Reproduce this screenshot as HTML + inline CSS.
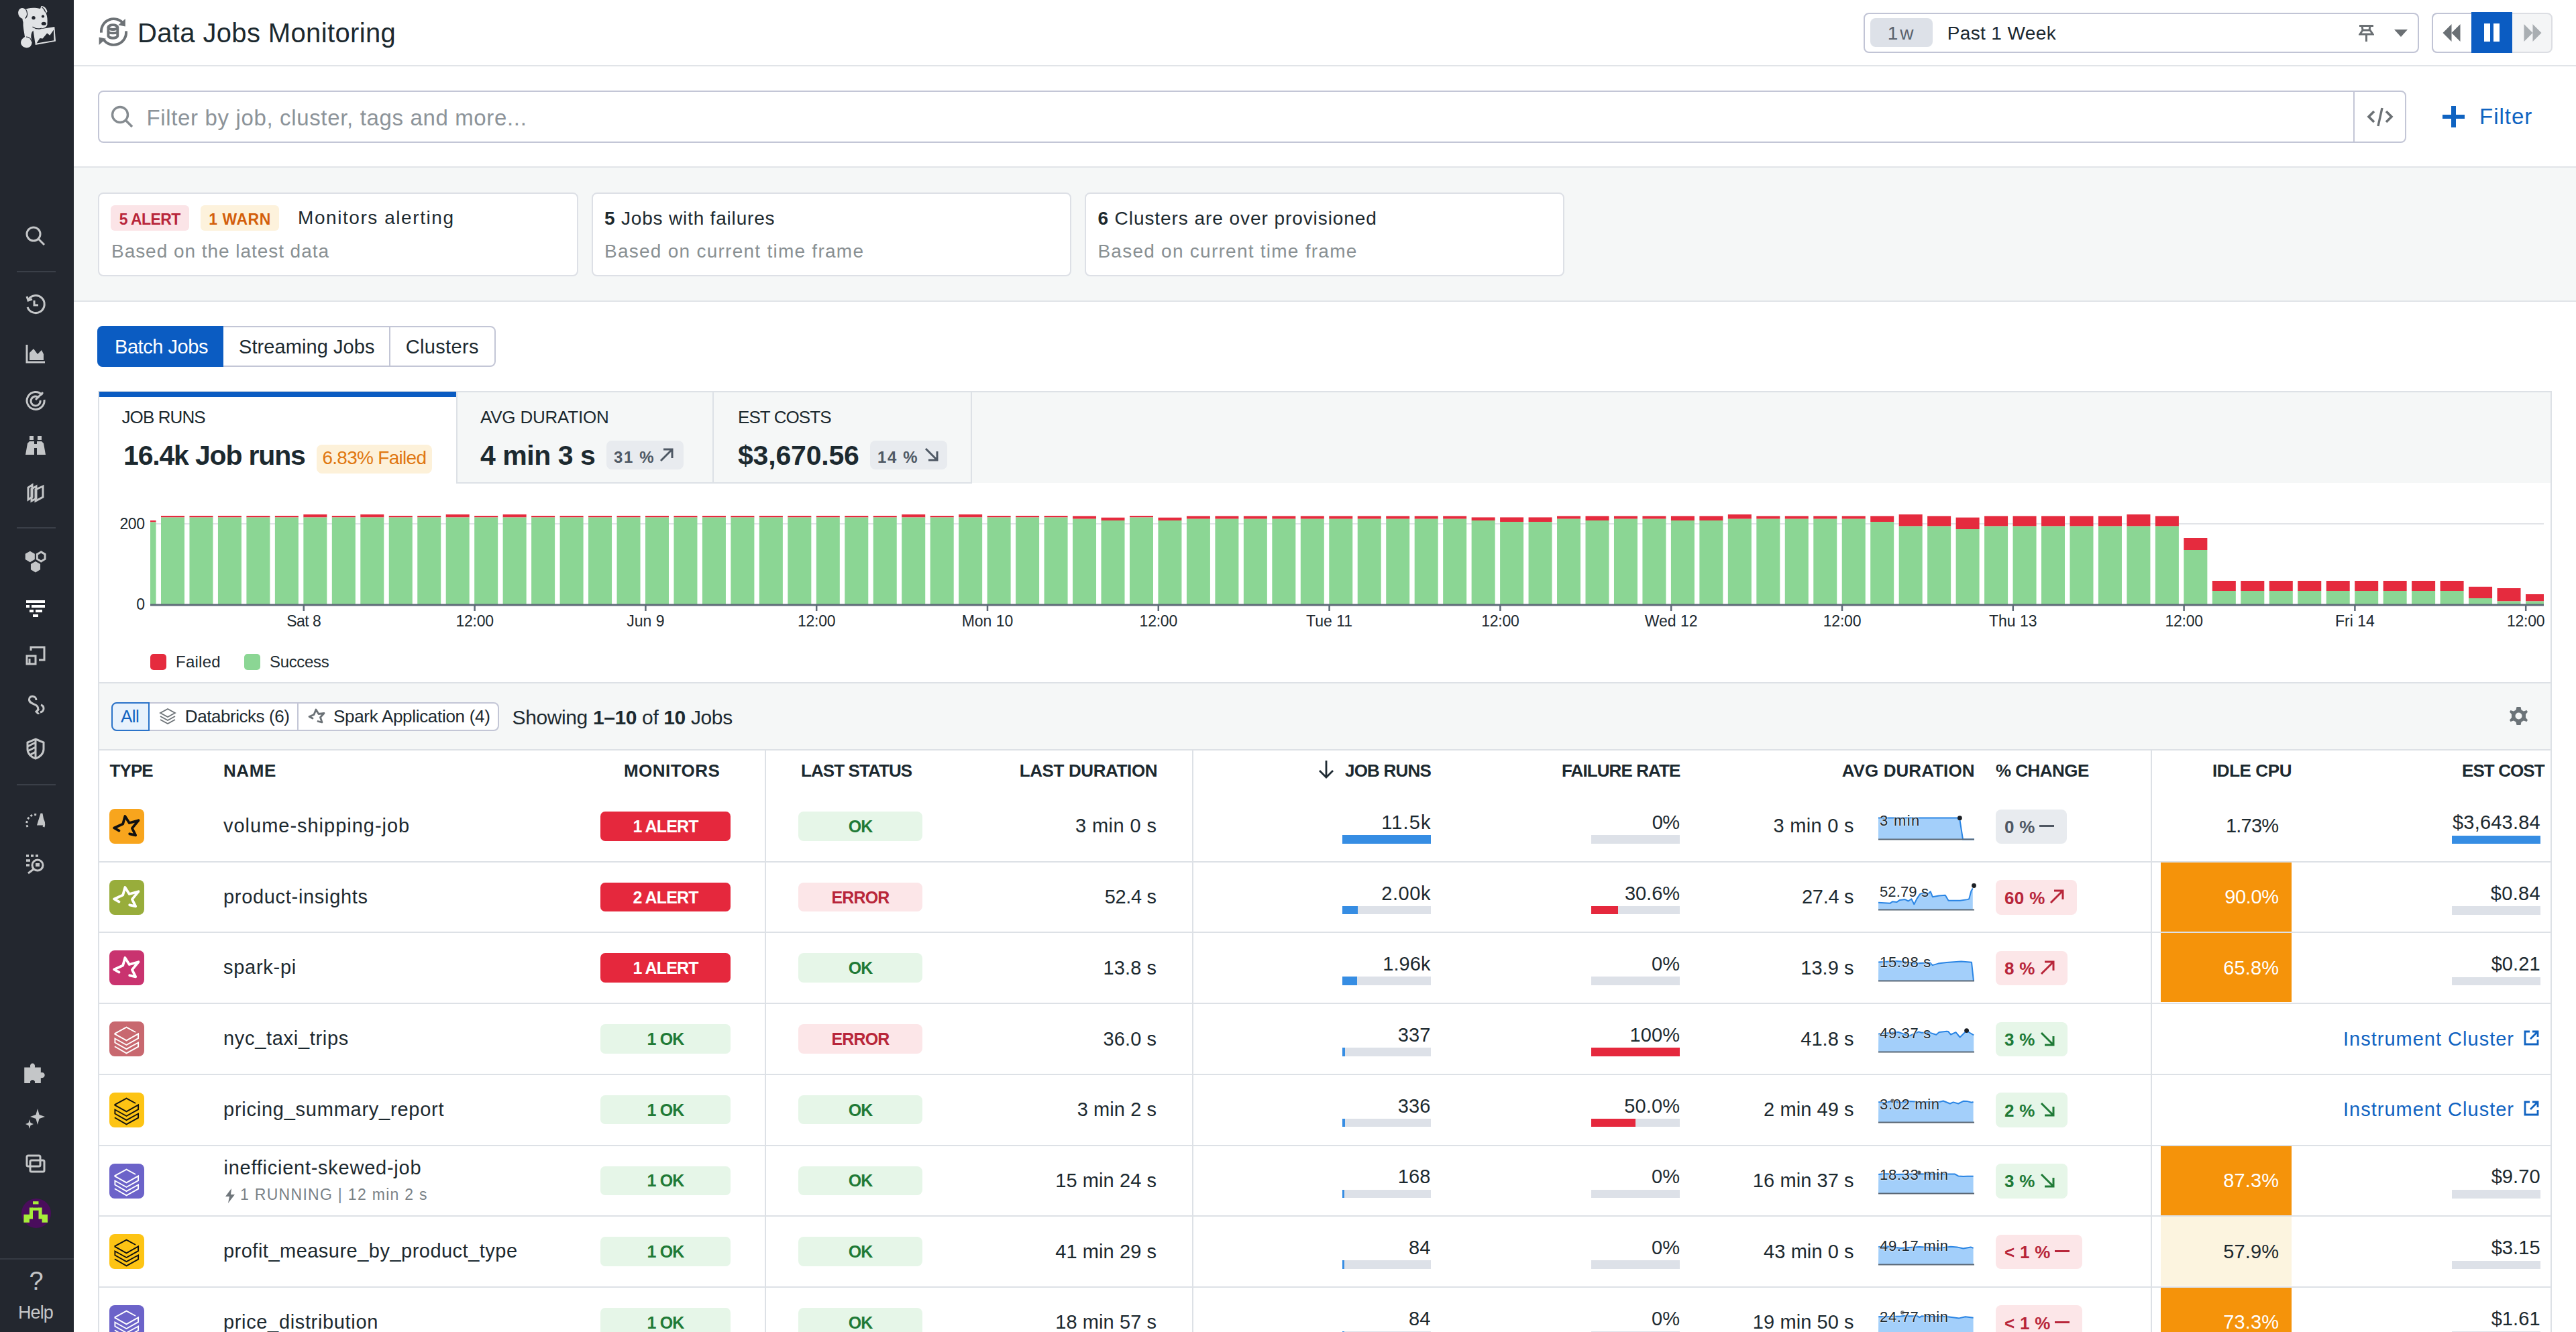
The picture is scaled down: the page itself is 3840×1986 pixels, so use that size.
<!DOCTYPE html>
<html><head><meta charset="utf-8"><title>Data Jobs Monitoring</title>
<style>
html,body{margin:0;padding:0;}
body{width:3840px;height:1986px;position:relative;overflow:hidden;background:#fff;font-family:"Liberation Sans", sans-serif;}
b{font-weight:700;}
@media (max-width: 2400px) { html { zoom: 0.5; } }
</style></head><body>
<div style="position:absolute;left:0.00px;top:0.00px;width:110.00px;height:1986.00px;background:#23272f;"></div>
<div style="position:absolute;left:110.00px;top:97.00px;width:3730.00px;height:2.00px;background:#e1e4e8;"></div>
<div style="position:absolute;left:110.00px;top:250.00px;width:3730.00px;height:198.00px;background:#f5f7f7;"></div>
<div style="position:absolute;left:110.00px;top:248.00px;width:3730.00px;height:2.00px;background:#e1e4e8;"></div>
<div style="position:absolute;left:110.00px;top:447.50px;width:3730.00px;height:2.00px;background:#e1e4e8;"></div>
<svg style="position:absolute;left:0.00px;top:0.00px;" width="110" height="110" viewBox="0 0 110 110">
<g fill="#e1e3e5">
<ellipse cx="34" cy="20" rx="6.8" ry="8.2" transform="rotate(-20 34 20)"/>
<path d="M36 15 C42 11 52 11 60 13 L61.5 9 C66 8.5 70 13 70.5 17.5 L68.5 19.5 C70.5 24 71 30 70.5 34.5 C71 38.5 68.5 41 64 42 L50 45.5 C47 47 46 52 46.5 57 C48 60 48.5 66 45 69.5 C41 72.5 34 71.5 31.5 66 C30 61 33 57.5 37 55 C36 47 34 40 34.5 33 C33 29 33 22 36 15 Z"/>
<path d="M49.5 45 L81.3 40 L83 61.5 L52.8 66.9 Z"/>
</g>
<g fill="#23272f">
<circle cx="50" cy="26.6" r="2.7"/><circle cx="64" cy="24.4" r="2.1"/>
<ellipse cx="65.3" cy="35.2" rx="3.6" ry="2.5"/>
<path d="M54.5 64.5 L59.5 57 L63.6 57.5 L70.2 49.5 L74.3 52.8 L80 44.6 L80.5 60.3 Z"/>
</g>
<g fill="none" stroke="#23272f" stroke-width="1.2">
<path d="M48.5 40 Q55 44.5 62 42"/>
<path d="M38.5 14 C41.5 18 41.5 24.5 37.5 27.5"/>
<path d="M62.5 10.5 C65 12.5 67 15.5 68 18.5"/>
<path d="M39 55 C44 55 46.5 58.5 47 62"/>
</g></svg>
<div style="position:absolute;left:25.00px;top:403.50px;width:58.00px;height:2.00px;background:#3a3f48;"></div>
<div style="position:absolute;left:25.00px;top:786.00px;width:58.00px;height:2.00px;background:#3a3f48;"></div>
<div style="position:absolute;left:25.00px;top:1169.00px;width:58.00px;height:2.00px;background:#3a3f48;"></div>
<div style="position:absolute;left:0.00px;top:1875.50px;width:110.00px;height:2.00px;background:#353a43;"></div>
<svg style="position:absolute;left:36.00px;top:335.00px;" width="34" height="34" viewBox="0 0 34 34"><g fill="none" stroke="#c4c6c8" stroke-width="3"><circle cx="14" cy="14" r="10"/><path d="M21.5 21.5 L30 30"/></g></svg>
<svg style="position:absolute;left:36.00px;top:438.00px;" width="34" height="34" viewBox="0 0 34 34"><g fill="none" stroke="#c4c6c8" stroke-width="3"><path d="M6 9 A13 13 0 1 1 5 20"/><path d="M4 4 L6 10 L12 8" /><path d="M15 10 V17 H21"/></g></svg>
<svg style="position:absolute;left:36.00px;top:510.00px;" width="34" height="34" viewBox="0 0 34 34"><g fill="none" stroke="#c4c6c8" stroke-width="3"><path d="M4 4 V30 H31"/><path d="M8 27 V16 L14 10 L20 18 L26 12 L29 18 V27Z" fill="#c4c6c8" stroke="none"/></g></svg>
<svg style="position:absolute;left:36.00px;top:578.50px;" width="34" height="34" viewBox="0 0 34 34"><g fill="none" stroke="#c4c6c8" stroke-width="3"><path d="M27 10 A13 13 0 1 0 30 17"/><path d="M22 14 A7 7 0 1 0 24 18"/><path d="M17 17 L28 6"/></g></svg>
<svg style="position:absolute;left:36.00px;top:647.00px;" width="34" height="34" viewBox="0 0 34 34"><g fill="none" stroke="#c4c6c8" stroke-width="3"><path d="M2 31 L5 14 L8 11 H15 V31Z M19 31 V11 H26 L29 14 L32 31Z M15 15 H19 V21 H15Z" fill="#c4c6c8" stroke="none"/><rect x="8" y="3" width="6" height="6" fill="#c4c6c8" stroke="none"/><rect x="20" y="3" width="6" height="6" fill="#c4c6c8" stroke="none"/></g></svg>
<svg style="position:absolute;left:36.00px;top:717.00px;" width="34" height="34" viewBox="0 0 34 34"><g fill="none" stroke="#c4c6c8" stroke-width="3"><path d="M6 10 L12 6 V24 L6 28Z"/><path d="M11 12 L18 8 V26 L11 30Z"/><path d="M17 13 L28 8 V24 L17 30Z"/></g></svg>
<svg style="position:absolute;left:33.00px;top:817.00px;" width="40" height="40" viewBox="0 0 34 34"><g fill="none" stroke="#c4c6c8" stroke-width="3"><path d="M10 4 L16 7.5 V14.5 L10 18 L4 14.5 V7.5Z M17 17 L23 20.5 V27.5 L17 31 L11 27.5 V20.5Z" fill="#c4c6c8" stroke="none"/><path d="M24 5 L29 8 V14 L24 17 L19 14 V8Z" stroke-width="2.5"/></g></svg>
<svg style="position:absolute;left:36.00px;top:890.70px;" width="34" height="34" viewBox="0 0 34 34"><g fill="none" stroke="#c4c6c8" stroke-width="3"><path d="M3 6 H31 M3 13 H8 M11 13 H31 M8 20 H14 M17 20 H27 M13 27 H21" stroke="#ffffff" stroke-width="4"/></g></svg>
<svg style="position:absolute;left:36.00px;top:959.60px;" width="34" height="34" viewBox="0 0 34 34"><g fill="none" stroke="#c4c6c8" stroke-width="3"><path d="M10 10 V5 H30 V24 H22"/><path d="M4 18 H17 V30 H4Z M8 22 V30"/></g></svg>
<svg style="position:absolute;left:36.00px;top:1030.50px;" width="34" height="34" viewBox="0 0 34 34"><g fill="none" stroke="#c4c6c8" stroke-width="3"><path d="M18 13 C18 6 8 5 7.5 11.5 C7 17 13 18 17 20 C21 22 22 27 19 29.5"/><path d="M24 31 C30 30 31 22 25 20" /><path d="M22 26 L18 30 L22 34" stroke-width="3"/></g></svg>
<svg style="position:absolute;left:36.00px;top:1099.40px;" width="34" height="34" viewBox="0 0 34 34"><g fill="none" stroke="#c4c6c8" stroke-width="3"><path d="M17 3 L29 8 V18 C29 25 23 30 17 32 C11 30 5 25 5 18 V8Z"/><path d="M17 3 V32 M5 14 L17 8 M5 21 L17 15 M8 27 L17 22"/></g></svg>
<svg style="position:absolute;left:36.00px;top:1207.00px;" width="34" height="34" viewBox="0 0 34 34"><g fill="none" stroke="#c4c6c8" stroke-width="3"><path d="M5 26 A13 13 0 0 1 20 8" stroke-dasharray="3 3"/><path d="M21 22 L26 6 L29 22Z" fill="#c4c6c8"/><path d="M27 14 A13 13 0 0 1 29 26"/></g></svg>
<svg style="position:absolute;left:36.00px;top:1269.70px;" width="34" height="34" viewBox="0 0 34 34"><g fill="none" stroke="#c4c6c8" stroke-width="3"><path d="M3 6 H7 M10 6 H14 M17 6 H21 M3 13 H9 M3 20 H8" stroke-width="3.5"/><circle cx="20" cy="20" r="8"/><path d="M14 26 L6 32"/><rect x="17" y="17" width="6" height="5" fill="#c4c6c8" stroke="none"/></g></svg>
<svg style="position:absolute;left:34.00px;top:1577.70px;" width="38" height="38" viewBox="0 0 34 34"><g fill="none" stroke="#c4c6c8" stroke-width="3"><path d="M2 12 H10 C8.5 5 17.5 5 16 12 H24 V19 C31 17.5 31 27.5 24 26 V33 H16 C17.5 27.5 8.5 27.5 10 33 H2Z" fill="#c4c6c8" stroke="none"/></g></svg>
<svg style="position:absolute;left:36.00px;top:1649.00px;" width="34" height="34" viewBox="0 0 34 34"><g fill="none" stroke="#c4c6c8" stroke-width="3"><path d="M20 4 L22.5 13 L31 16 L22.5 19 L20 28 L17.5 19 L9 16 L17.5 13Z M8 20 L9.5 25 L14 27 L9.5 29 L8 34 L6.5 29 L2 27 L6.5 25Z" fill="#c4c6c8" stroke="none"/></g></svg>
<svg style="position:absolute;left:36.00px;top:1718.00px;" width="34" height="34" viewBox="0 0 34 34"><g fill="none" stroke="#c4c6c8" stroke-width="3"><rect x="4" y="5" width="20" height="16" rx="2"/><rect x="9" y="12" width="21" height="17" rx="2"/></g></svg>
<svg style="position:absolute;left:31.50px;top:1787.00px;" width="44" height="44" viewBox="0 0 44 44"><circle cx="22" cy="22" r="22" fill="#4a0d5c"/><g fill="#a6ec3a"><rect x="17" y="4.2" width="8.5" height="4.3"/><path d="M3.4 23.8 H11.9 V13.6 H17 V30.6 H11.9 V35.7 H3.4 Z"/><path d="M39 23.8 H30.6 V13.6 H25.5 V30.6 H30.6 V35.7 H39 Z"/><rect x="16.5" y="13.6" width="9.5" height="4.2"/></g></svg>
<div id="t0" style="position:absolute;top:1890.83px;font-size:38.00px;line-height:38.00px;color:#c4c6c8;font-weight:400;white-space:nowrap;letter-spacing:0.000px;left:54.00px;width:0;display:flex;justify-content:center;"><span>?</span></div>
<div id="t1" style="position:absolute;top:1944.14px;font-size:27.00px;line-height:27.00px;color:#c4c6c8;font-weight:400;white-space:nowrap;letter-spacing:-0.883px;left:53.00px;width:0;display:flex;justify-content:center;"><span>Help</span></div>
<svg style="position:absolute;left:142.50px;top:21.00px;" width="53" height="53" viewBox="0 0 46 46"><g fill="none" stroke="#6d7276" stroke-width="3.4">
<path d="M7 24 A16 16 0 0 1 36 13"/><path d="M39 22 A16 16 0 0 1 10 33"/>
<ellipse cx="22" cy="17" rx="6" ry="3"/><path d="M16 17 V28 C16 32 28 32 28 28 V17"/><path d="M16 22.5 C16 25.5 28 25.5 28 22.5" stroke-width="3"/>
</g>
<path d="M38 6 L38 16 L29 14Z" fill="#6d7276"/><path d="M4 40 L4 30 L13 32Z" fill="#6d7276"/></svg>
<div id="t2" style="position:absolute;top:29.13px;font-size:40.00px;line-height:40.00px;color:#1c292f;font-weight:400;white-space:nowrap;letter-spacing:0.359px;left:205.00px;"><span>Data Jobs Monitoring</span></div>
<div style="position:absolute;left:2777.50px;top:18.50px;width:828.50px;height:60.00px;background:#fff;border:2px solid #c1c4d5;border-radius:8px;box-sizing:border-box;"></div>
<div style="position:absolute;left:2788.00px;top:27.00px;width:92.50px;height:42.50px;background:#dde1e8;border-radius:8px;"></div>
<div id="t3" style="position:absolute;top:36.29px;font-size:28.00px;line-height:28.00px;color:#5a636e;font-weight:400;white-space:nowrap;letter-spacing:2.852px;left:2834.50px;width:0;display:flex;justify-content:center;"><span>1w</span></div>
<div id="t4" style="position:absolute;top:36.29px;font-size:28.00px;line-height:28.00px;color:#1c292f;font-weight:400;white-space:nowrap;letter-spacing:0.373px;left:2902.70px;"><span>Past 1 Week</span></div>
<svg style="position:absolute;left:3516.00px;top:36.00px;" width="23" height="27" viewBox="0 0 23 27"><path d="M1 2.5 H22 M5 2.5 L6 9 M17 2.5 L16 9 M6 9 L2 15 H21 L17 9Z M11.5 15 V26" fill="none" stroke="#6b7074" stroke-width="3"/></svg>
<svg style="position:absolute;left:3569.00px;top:44.00px;" width="20" height="11" viewBox="0 0 20 11"><path d="M0 0 H20 L10 11Z" fill="#6b7074"/></svg>
<div style="position:absolute;left:3624.50px;top:18.50px;width:180.00px;height:60.00px;background:#f4f5f6;border:2px solid #dcdee3;border-radius:8px;box-sizing:border-box;"></div>
<div style="position:absolute;left:3624.5px;top:18.5px;width:70px;height:60px;border:2px solid #c1c4d5;border-right:none;border-radius:8px 0 0 8px;background:#fff;box-sizing:border-box;"></div>
<div style="position:absolute;left:3684.00px;top:18.00px;width:61.00px;height:60.50px;background:#0b5cc2;"></div>
<svg style="position:absolute;left:3641.00px;top:36.00px;" width="27" height="26" viewBox="0 0 26 26"><path d="M0 13 L13 0 V26Z M13 13 L26 0 V26Z" fill="#6a7075"/></svg>
<div style="position:absolute;left:3702.70px;top:35.00px;width:9.10px;height:27.20px;background:#fff;"></div>
<div style="position:absolute;left:3717.40px;top:35.00px;width:8.90px;height:27.20px;background:#fff;"></div>
<svg style="position:absolute;left:3762.00px;top:36.00px;" width="27" height="26" viewBox="0 0 26 26"><path d="M0 0 L13 13 L0 26Z M13 0 L26 13 L13 26Z" fill="#a9aeb2"/></svg>
<div style="position:absolute;left:145.50px;top:134.50px;width:3441.50px;height:78.00px;background:#fff;border:2px solid #c3c6d6;border-radius:8px;box-sizing:border-box;"></div>
<div style="position:absolute;left:3508.00px;top:135.00px;width:2.00px;height:77.00px;background:#c3c6d6;"></div>
<svg style="position:absolute;left:164.00px;top:156.00px;" width="38" height="38" viewBox="0 0 38 38"><circle cx="15" cy="15" r="11.5" fill="none" stroke="#858b90" stroke-width="3.4"/><path d="M23.5 23.5 L33 33" stroke="#858b90" stroke-width="3.6"/></svg>
<div id="t5" style="position:absolute;top:158.66px;font-size:33.00px;line-height:33.00px;color:#8c9399;font-weight:400;white-space:nowrap;letter-spacing:0.647px;left:218.50px;"><span>Filter by job, cluster, tags and more...</span></div>
<svg style="position:absolute;left:3528.00px;top:158.00px;" width="40" height="32" viewBox="0 0 40 32"><path d="M11 8 L3 16 L11 24 M29 8 L37 16 L29 24" fill="none" stroke="#6b7074" stroke-width="3.6"/><path d="M23 3 L17 30" stroke="#6b7074" stroke-width="3.4"/></svg>
<div style="position:absolute;left:3641.00px;top:170.50px;width:33.00px;height:6.50px;background:#0f63c1;"></div>
<div style="position:absolute;left:3654.30px;top:157.50px;width:6.50px;height:32.50px;background:#0f63c1;"></div>
<div id="t6" style="position:absolute;top:156.86px;font-size:33.00px;line-height:33.00px;color:#0f63c1;font-weight:400;white-space:nowrap;letter-spacing:0.994px;left:3696.00px;"><span>Filter</span></div>
<div style="position:absolute;left:146.00px;top:287.00px;width:715.50px;height:124.50px;background:#fff;border:2px solid #dde0e6;border-radius:8px;box-sizing:border-box;"></div>
<div style="position:absolute;left:882.00px;top:287.00px;width:714.50px;height:124.50px;background:#fff;border:2px solid #dde0e6;border-radius:8px;box-sizing:border-box;"></div>
<div style="position:absolute;left:1617.00px;top:287.00px;width:715.00px;height:124.50px;background:#fff;border:2px solid #dde0e6;border-radius:8px;box-sizing:border-box;"></div>
<div style="position:absolute;left:165.00px;top:306.00px;width:116.50px;height:38.00px;background:#fbe4e7;border-radius:6px;"></div>
<div id="t7" style="position:absolute;top:315.73px;font-size:23.00px;line-height:23.00px;color:#b8263b;font-weight:700;white-space:nowrap;letter-spacing:-0.565px;left:223.30px;width:0;display:flex;justify-content:center;"><span>5 ALERT</span></div>
<div style="position:absolute;left:299.00px;top:306.00px;width:117.00px;height:38.00px;background:#fdf2dc;border-radius:6px;"></div>
<div id="t8" style="position:absolute;top:315.73px;font-size:23.00px;line-height:23.00px;color:#d35f0c;font-weight:700;white-space:nowrap;letter-spacing:0.530px;left:357.50px;width:0;display:flex;justify-content:center;"><span>1 WARN</span></div>
<div id="t9" style="position:absolute;top:311.49px;font-size:28.00px;line-height:28.00px;color:#1c292f;font-weight:400;white-space:nowrap;letter-spacing:1.561px;left:444.00px;"><span>Monitors alerting</span></div>
<div id="t10" style="position:absolute;top:361.29px;font-size:28.00px;line-height:28.00px;color:#899093;font-weight:400;white-space:nowrap;letter-spacing:0.955px;left:166.00px;"><span>Based on the latest data</span></div>
<div id="t11" style="position:absolute;top:312.29px;font-size:28.00px;line-height:28.00px;color:#1c292f;font-weight:400;white-space:nowrap;letter-spacing:0.813px;left:901.00px;"><span><b>5</b> Jobs with failures</span></div>
<div id="t12" style="position:absolute;top:361.29px;font-size:28.00px;line-height:28.00px;color:#899093;font-weight:400;white-space:nowrap;letter-spacing:1.257px;left:901.00px;"><span>Based on current time frame</span></div>
<div id="t13" style="position:absolute;top:312.29px;font-size:28.00px;line-height:28.00px;color:#1c292f;font-weight:400;white-space:nowrap;letter-spacing:0.934px;left:1636.40px;"><span><b>6</b> Clusters are over provisioned</span></div>
<div id="t14" style="position:absolute;top:361.29px;font-size:28.00px;line-height:28.00px;color:#899093;font-weight:400;white-space:nowrap;letter-spacing:1.257px;left:1636.40px;"><span>Based on current time frame</span></div>
<div style="position:absolute;left:145.00px;top:486.00px;width:594.00px;height:61.00px;background:#fff;border:2px solid #c3c6d6;border-radius:8px;box-sizing:border-box;"></div>
<div style="position:absolute;left:145px;top:486px;width:188px;height:61px;background:#0b5cc2;border-radius:8px 0 0 8px;"></div>
<div style="position:absolute;left:580.00px;top:487.00px;width:2.00px;height:59.00px;background:#c3c6d6;"></div>
<div id="t15" style="position:absolute;top:503.25px;font-size:29.00px;line-height:29.00px;color:#fff;font-weight:400;white-space:nowrap;letter-spacing:-0.450px;left:171.00px;"><span>Batch Jobs</span></div>
<div id="t16" style="position:absolute;top:503.25px;font-size:29.00px;line-height:29.00px;color:#1c292f;font-weight:400;white-space:nowrap;letter-spacing:0.080px;left:356.00px;"><span>Streaming Jobs</span></div>
<div id="t17" style="position:absolute;top:503.25px;font-size:29.00px;line-height:29.00px;color:#1c292f;font-weight:400;white-space:nowrap;letter-spacing:0.338px;left:604.70px;"><span>Clusters</span></div>
<div style="position:absolute;left:146.00px;top:583.00px;width:2.00px;height:1403.00px;background:#dde1e6;"></div>
<div style="position:absolute;left:3802.00px;top:583.00px;width:2.00px;height:1403.00px;background:#dde1e6;"></div>
<div style="position:absolute;left:146.00px;top:583.00px;width:3658.00px;height:2.00px;background:#dde1e6;"></div>
<div style="position:absolute;left:148.00px;top:585.00px;width:3654.00px;height:135.00px;background:#f5f7f7;"></div>
<div style="position:absolute;left:148.00px;top:585.00px;width:532.00px;height:135.00px;background:#fff;"></div>
<div style="position:absolute;left:148.00px;top:584.00px;width:532.00px;height:7.50px;background:#0b5cc2;"></div>
<div style="position:absolute;left:1062.00px;top:585.00px;width:2.00px;height:135.00px;background:#dde1e6;"></div>
<div style="position:absolute;left:1447.00px;top:585.00px;width:2.00px;height:135.00px;background:#dde1e6;"></div>
<div style="position:absolute;left:680.00px;top:718.50px;width:769.00px;height:2.00px;background:#dde1e6;"></div>
<div style="position:absolute;left:680.00px;top:585.00px;width:2.00px;height:135.00px;background:#dde1e6;"></div>
<div id="t18" style="position:absolute;top:608.99px;font-size:26.00px;line-height:26.00px;color:#1c292f;font-weight:400;white-space:nowrap;letter-spacing:-0.910px;left:181.50px;"><span>JOB RUNS</span></div>
<div id="t19" style="position:absolute;top:658.99px;font-size:41.00px;line-height:41.00px;color:#1c292f;font-weight:700;white-space:nowrap;letter-spacing:-1.173px;left:184.00px;"><span>16.4k Job runs</span></div>
<div style="position:absolute;left:472.00px;top:663.00px;width:171.50px;height:43.00px;background:#fdf1d9;border-radius:8px;"></div>
<div id="t20" style="position:absolute;top:669.29px;font-size:28.00px;line-height:28.00px;color:#e07710;font-weight:400;white-space:nowrap;letter-spacing:-0.716px;left:480.40px;"><span>6.83% Failed</span></div>
<div id="t21" style="position:absolute;top:608.99px;font-size:26.00px;line-height:26.00px;color:#1c292f;font-weight:400;white-space:nowrap;letter-spacing:-0.204px;left:716.00px;"><span>AVG DURATION</span></div>
<div id="t22" style="position:absolute;top:658.99px;font-size:41.00px;line-height:41.00px;color:#1c292f;font-weight:700;white-space:nowrap;letter-spacing:-0.451px;left:716.00px;"><span>4 min 3 s</span></div>
<div style="position:absolute;left:904.00px;top:657.00px;width:114.50px;height:43.00px;background:#e8ebef;border-radius:8px;"></div>
<div id="t23" style="position:absolute;top:669.68px;font-size:24.00px;line-height:24.00px;color:#4f5965;font-weight:700;white-space:nowrap;letter-spacing:1.650px;left:915.00px;"><span>31 % </span></div>
<svg style="position:absolute;left:981.00px;top:665.00px;" width="26" height="26" viewBox="0 0 26 26"><path d="M4 22 L21 5 M8 5 H21 V18" fill="none" stroke="#4f5965" stroke-width="3"/></svg>
<div id="t24" style="position:absolute;top:608.99px;font-size:26.00px;line-height:26.00px;color:#1c292f;font-weight:400;white-space:nowrap;letter-spacing:-0.910px;left:1100.00px;"><span>EST COSTS</span></div>
<div id="t25" style="position:absolute;top:658.99px;font-size:41.00px;line-height:41.00px;color:#1c292f;font-weight:700;white-space:nowrap;letter-spacing:-0.191px;left:1100.00px;"><span>$3,670.56</span></div>
<div style="position:absolute;left:1297.00px;top:657.00px;width:114.50px;height:43.00px;background:#e8ebef;border-radius:8px;"></div>
<div id="t26" style="position:absolute;top:669.68px;font-size:24.00px;line-height:24.00px;color:#4f5965;font-weight:700;white-space:nowrap;letter-spacing:1.650px;left:1308.00px;"><span>14 % </span></div>
<svg style="position:absolute;left:1376.00px;top:665.00px;" width="26" height="26" viewBox="0 0 26 26"><path d="M4 4 L21 21 M21 8 V21 H8" fill="none" stroke="#4f5965" stroke-width="3"/></svg>
<svg style="position:absolute;left:224.00px;top:700.00px;" width="3568" height="220" viewBox="0 0 3568 220"><rect x="0" y="80.25" width="3568" height="1.5" fill="#d9dce1"/><rect x="0.00" y="76.00" width="8.53" height="2.50" fill="#e52b3e"/><rect x="0.00" y="78.50" width="8.53" height="122.50" fill="#8bd694"/><rect x="16.00" y="69.00" width="35.00" height="2.50" fill="#e52b3e"/><rect x="16.00" y="71.50" width="35.00" height="129.50" fill="#8bd694"/><rect x="58.47" y="69.00" width="35.00" height="2.50" fill="#e52b3e"/><rect x="58.47" y="71.50" width="35.00" height="129.50" fill="#8bd694"/><rect x="100.94" y="69.00" width="35.00" height="2.50" fill="#e52b3e"/><rect x="100.94" y="71.50" width="35.00" height="129.50" fill="#8bd694"/><rect x="143.41" y="69.00" width="35.00" height="2.50" fill="#e52b3e"/><rect x="143.41" y="71.50" width="35.00" height="129.50" fill="#8bd694"/><rect x="185.88" y="69.00" width="35.00" height="2.50" fill="#e52b3e"/><rect x="185.88" y="71.50" width="35.00" height="129.50" fill="#8bd694"/><rect x="228.35" y="67.00" width="35.00" height="4.50" fill="#e52b3e"/><rect x="228.35" y="71.50" width="35.00" height="129.50" fill="#8bd694"/><rect x="270.82" y="69.00" width="35.00" height="2.50" fill="#e52b3e"/><rect x="270.82" y="71.50" width="35.00" height="129.50" fill="#8bd694"/><rect x="313.29" y="67.00" width="35.00" height="4.50" fill="#e52b3e"/><rect x="313.29" y="71.50" width="35.00" height="129.50" fill="#8bd694"/><rect x="355.76" y="69.00" width="35.00" height="2.50" fill="#e52b3e"/><rect x="355.76" y="71.50" width="35.00" height="129.50" fill="#8bd694"/><rect x="398.23" y="69.00" width="35.00" height="2.50" fill="#e52b3e"/><rect x="398.23" y="71.50" width="35.00" height="129.50" fill="#8bd694"/><rect x="440.70" y="67.00" width="35.00" height="4.50" fill="#e52b3e"/><rect x="440.70" y="71.50" width="35.00" height="129.50" fill="#8bd694"/><rect x="483.17" y="69.00" width="35.00" height="2.50" fill="#e52b3e"/><rect x="483.17" y="71.50" width="35.00" height="129.50" fill="#8bd694"/><rect x="525.64" y="67.00" width="35.00" height="4.50" fill="#e52b3e"/><rect x="525.64" y="71.50" width="35.00" height="129.50" fill="#8bd694"/><rect x="568.11" y="69.00" width="35.00" height="2.50" fill="#e52b3e"/><rect x="568.11" y="71.50" width="35.00" height="129.50" fill="#8bd694"/><rect x="610.58" y="69.00" width="35.00" height="2.50" fill="#e52b3e"/><rect x="610.58" y="71.50" width="35.00" height="129.50" fill="#8bd694"/><rect x="653.05" y="69.00" width="35.00" height="2.50" fill="#e52b3e"/><rect x="653.05" y="71.50" width="35.00" height="129.50" fill="#8bd694"/><rect x="695.52" y="69.00" width="35.00" height="2.50" fill="#e52b3e"/><rect x="695.52" y="71.50" width="35.00" height="129.50" fill="#8bd694"/><rect x="737.99" y="69.00" width="35.00" height="2.50" fill="#e52b3e"/><rect x="737.99" y="71.50" width="35.00" height="129.50" fill="#8bd694"/><rect x="780.46" y="69.00" width="35.00" height="2.50" fill="#e52b3e"/><rect x="780.46" y="71.50" width="35.00" height="129.50" fill="#8bd694"/><rect x="822.93" y="69.00" width="35.00" height="2.50" fill="#e52b3e"/><rect x="822.93" y="71.50" width="35.00" height="129.50" fill="#8bd694"/><rect x="865.40" y="69.00" width="35.00" height="2.50" fill="#e52b3e"/><rect x="865.40" y="71.50" width="35.00" height="129.50" fill="#8bd694"/><rect x="907.87" y="69.00" width="35.00" height="2.50" fill="#e52b3e"/><rect x="907.87" y="71.50" width="35.00" height="129.50" fill="#8bd694"/><rect x="950.34" y="69.00" width="35.00" height="2.50" fill="#e52b3e"/><rect x="950.34" y="71.50" width="35.00" height="129.50" fill="#8bd694"/><rect x="992.81" y="69.00" width="35.00" height="2.50" fill="#e52b3e"/><rect x="992.81" y="71.50" width="35.00" height="129.50" fill="#8bd694"/><rect x="1035.28" y="69.00" width="35.00" height="2.50" fill="#e52b3e"/><rect x="1035.28" y="71.50" width="35.00" height="129.50" fill="#8bd694"/><rect x="1077.75" y="69.00" width="35.00" height="2.50" fill="#e52b3e"/><rect x="1077.75" y="71.50" width="35.00" height="129.50" fill="#8bd694"/><rect x="1120.22" y="67.00" width="35.00" height="4.50" fill="#e52b3e"/><rect x="1120.22" y="71.50" width="35.00" height="129.50" fill="#8bd694"/><rect x="1162.69" y="69.00" width="35.00" height="2.50" fill="#e52b3e"/><rect x="1162.69" y="71.50" width="35.00" height="129.50" fill="#8bd694"/><rect x="1205.16" y="67.00" width="35.00" height="4.50" fill="#e52b3e"/><rect x="1205.16" y="71.50" width="35.00" height="129.50" fill="#8bd694"/><rect x="1247.63" y="69.00" width="35.00" height="2.50" fill="#e52b3e"/><rect x="1247.63" y="71.50" width="35.00" height="129.50" fill="#8bd694"/><rect x="1290.10" y="69.00" width="35.00" height="2.50" fill="#e52b3e"/><rect x="1290.10" y="71.50" width="35.00" height="129.50" fill="#8bd694"/><rect x="1332.57" y="69.00" width="35.00" height="2.50" fill="#e52b3e"/><rect x="1332.57" y="71.50" width="35.00" height="129.50" fill="#8bd694"/><rect x="1375.04" y="69.40" width="35.00" height="4.30" fill="#e52b3e"/><rect x="1375.04" y="73.70" width="35.00" height="127.30" fill="#8bd694"/><rect x="1417.51" y="71.70" width="35.00" height="4.30" fill="#e52b3e"/><rect x="1417.51" y="76.00" width="35.00" height="125.00" fill="#8bd694"/><rect x="1459.98" y="69.00" width="35.00" height="2.50" fill="#e52b3e"/><rect x="1459.98" y="71.50" width="35.00" height="129.50" fill="#8bd694"/><rect x="1502.45" y="71.70" width="35.00" height="4.30" fill="#e52b3e"/><rect x="1502.45" y="76.00" width="35.00" height="125.00" fill="#8bd694"/><rect x="1544.92" y="69.40" width="35.00" height="4.30" fill="#e52b3e"/><rect x="1544.92" y="73.70" width="35.00" height="127.30" fill="#8bd694"/><rect x="1587.39" y="69.40" width="35.00" height="4.30" fill="#e52b3e"/><rect x="1587.39" y="73.70" width="35.00" height="127.30" fill="#8bd694"/><rect x="1629.86" y="69.40" width="35.00" height="4.30" fill="#e52b3e"/><rect x="1629.86" y="73.70" width="35.00" height="127.30" fill="#8bd694"/><rect x="1672.33" y="69.40" width="35.00" height="4.30" fill="#e52b3e"/><rect x="1672.33" y="73.70" width="35.00" height="127.30" fill="#8bd694"/><rect x="1714.80" y="69.40" width="35.00" height="4.30" fill="#e52b3e"/><rect x="1714.80" y="73.70" width="35.00" height="127.30" fill="#8bd694"/><rect x="1757.27" y="69.40" width="35.00" height="4.30" fill="#e52b3e"/><rect x="1757.27" y="73.70" width="35.00" height="127.30" fill="#8bd694"/><rect x="1799.74" y="69.40" width="35.00" height="4.30" fill="#e52b3e"/><rect x="1799.74" y="73.70" width="35.00" height="127.30" fill="#8bd694"/><rect x="1842.21" y="69.40" width="35.00" height="4.30" fill="#e52b3e"/><rect x="1842.21" y="73.70" width="35.00" height="127.30" fill="#8bd694"/><rect x="1884.68" y="69.40" width="35.00" height="4.30" fill="#e52b3e"/><rect x="1884.68" y="73.70" width="35.00" height="127.30" fill="#8bd694"/><rect x="1927.15" y="69.40" width="35.00" height="4.30" fill="#e52b3e"/><rect x="1927.15" y="73.70" width="35.00" height="127.30" fill="#8bd694"/><rect x="1969.62" y="71.40" width="35.00" height="4.60" fill="#e52b3e"/><rect x="1969.62" y="76.00" width="35.00" height="125.00" fill="#8bd694"/><rect x="2012.09" y="71.40" width="35.00" height="6.60" fill="#e52b3e"/><rect x="2012.09" y="78.00" width="35.00" height="123.00" fill="#8bd694"/><rect x="2054.56" y="71.40" width="35.00" height="6.60" fill="#e52b3e"/><rect x="2054.56" y="78.00" width="35.00" height="123.00" fill="#8bd694"/><rect x="2097.03" y="69.40" width="35.00" height="4.30" fill="#e52b3e"/><rect x="2097.03" y="73.70" width="35.00" height="127.30" fill="#8bd694"/><rect x="2139.50" y="69.40" width="35.00" height="6.60" fill="#e52b3e"/><rect x="2139.50" y="76.00" width="35.00" height="125.00" fill="#8bd694"/><rect x="2181.97" y="69.40" width="35.00" height="4.30" fill="#e52b3e"/><rect x="2181.97" y="73.70" width="35.00" height="127.30" fill="#8bd694"/><rect x="2224.44" y="69.40" width="35.00" height="4.30" fill="#e52b3e"/><rect x="2224.44" y="73.70" width="35.00" height="127.30" fill="#8bd694"/><rect x="2266.91" y="69.40" width="35.00" height="6.60" fill="#e52b3e"/><rect x="2266.91" y="76.00" width="35.00" height="125.00" fill="#8bd694"/><rect x="2309.38" y="69.40" width="35.00" height="6.60" fill="#e52b3e"/><rect x="2309.38" y="76.00" width="35.00" height="125.00" fill="#8bd694"/><rect x="2351.85" y="67.00" width="35.00" height="6.70" fill="#e52b3e"/><rect x="2351.85" y="73.70" width="35.00" height="127.30" fill="#8bd694"/><rect x="2394.32" y="69.40" width="35.00" height="4.30" fill="#e52b3e"/><rect x="2394.32" y="73.70" width="35.00" height="127.30" fill="#8bd694"/><rect x="2436.79" y="69.40" width="35.00" height="4.30" fill="#e52b3e"/><rect x="2436.79" y="73.70" width="35.00" height="127.30" fill="#8bd694"/><rect x="2479.26" y="69.40" width="35.00" height="4.30" fill="#e52b3e"/><rect x="2479.26" y="73.70" width="35.00" height="127.30" fill="#8bd694"/><rect x="2521.73" y="69.40" width="35.00" height="4.30" fill="#e52b3e"/><rect x="2521.73" y="73.70" width="35.00" height="127.30" fill="#8bd694"/><rect x="2564.20" y="69.40" width="35.00" height="8.60" fill="#e52b3e"/><rect x="2564.20" y="78.00" width="35.00" height="123.00" fill="#8bd694"/><rect x="2606.67" y="67.00" width="35.00" height="17.60" fill="#e52b3e"/><rect x="2606.67" y="84.60" width="35.00" height="116.40" fill="#8bd694"/><rect x="2649.14" y="69.40" width="35.00" height="15.20" fill="#e52b3e"/><rect x="2649.14" y="84.60" width="35.00" height="116.40" fill="#8bd694"/><rect x="2691.61" y="71.60" width="35.00" height="17.40" fill="#e52b3e"/><rect x="2691.61" y="89.00" width="35.00" height="112.00" fill="#8bd694"/><rect x="2734.08" y="69.40" width="35.00" height="15.20" fill="#e52b3e"/><rect x="2734.08" y="84.60" width="35.00" height="116.40" fill="#8bd694"/><rect x="2776.55" y="69.40" width="35.00" height="15.20" fill="#e52b3e"/><rect x="2776.55" y="84.60" width="35.00" height="116.40" fill="#8bd694"/><rect x="2819.02" y="69.40" width="35.00" height="15.20" fill="#e52b3e"/><rect x="2819.02" y="84.60" width="35.00" height="116.40" fill="#8bd694"/><rect x="2861.49" y="69.40" width="35.00" height="15.20" fill="#e52b3e"/><rect x="2861.49" y="84.60" width="35.00" height="116.40" fill="#8bd694"/><rect x="2903.96" y="69.40" width="35.00" height="15.20" fill="#e52b3e"/><rect x="2903.96" y="84.60" width="35.00" height="116.40" fill="#8bd694"/><rect x="2946.43" y="67.00" width="35.00" height="17.60" fill="#e52b3e"/><rect x="2946.43" y="84.60" width="35.00" height="116.40" fill="#8bd694"/><rect x="2988.90" y="69.40" width="35.00" height="15.20" fill="#e52b3e"/><rect x="2988.90" y="84.60" width="35.00" height="116.40" fill="#8bd694"/><rect x="3031.37" y="102.00" width="35.00" height="18.00" fill="#e52b3e"/><rect x="3031.37" y="120.00" width="35.00" height="81.00" fill="#8bd694"/><rect x="3073.84" y="166.00" width="35.00" height="15.00" fill="#e52b3e"/><rect x="3073.84" y="181.00" width="35.00" height="20.00" fill="#8bd694"/><rect x="3116.31" y="166.00" width="35.00" height="15.00" fill="#e52b3e"/><rect x="3116.31" y="181.00" width="35.00" height="20.00" fill="#8bd694"/><rect x="3158.78" y="166.00" width="35.00" height="15.00" fill="#e52b3e"/><rect x="3158.78" y="181.00" width="35.00" height="20.00" fill="#8bd694"/><rect x="3201.25" y="166.00" width="35.00" height="15.00" fill="#e52b3e"/><rect x="3201.25" y="181.00" width="35.00" height="20.00" fill="#8bd694"/><rect x="3243.72" y="166.00" width="35.00" height="15.00" fill="#e52b3e"/><rect x="3243.72" y="181.00" width="35.00" height="20.00" fill="#8bd694"/><rect x="3286.19" y="166.00" width="35.00" height="15.00" fill="#e52b3e"/><rect x="3286.19" y="181.00" width="35.00" height="20.00" fill="#8bd694"/><rect x="3328.66" y="166.00" width="35.00" height="15.00" fill="#e52b3e"/><rect x="3328.66" y="181.00" width="35.00" height="20.00" fill="#8bd694"/><rect x="3371.13" y="166.00" width="35.00" height="15.00" fill="#e52b3e"/><rect x="3371.13" y="181.00" width="35.00" height="20.00" fill="#8bd694"/><rect x="3413.60" y="166.00" width="35.00" height="15.00" fill="#e52b3e"/><rect x="3413.60" y="181.00" width="35.00" height="20.00" fill="#8bd694"/><rect x="3456.07" y="174.80" width="35.00" height="17.20" fill="#e52b3e"/><rect x="3456.07" y="192.00" width="35.00" height="9.00" fill="#8bd694"/><rect x="3498.54" y="177.00" width="35.00" height="19.50" fill="#e52b3e"/><rect x="3498.54" y="196.50" width="35.00" height="4.50" fill="#8bd694"/><rect x="3541.01" y="186.00" width="26.99" height="10.50" fill="#e52b3e"/><rect x="3541.01" y="196.50" width="26.99" height="4.50" fill="#8bd694"/><rect x="0" y="200.5" width="3568" height="3" fill="#5f6a78"/><rect x="227.55" y="201" width="2.5" height="10" fill="#5f6a78"/><rect x="482.35" y="201" width="2.5" height="10" fill="#5f6a78"/><rect x="737.15" y="201" width="2.5" height="10" fill="#5f6a78"/><rect x="991.95" y="201" width="2.5" height="10" fill="#5f6a78"/><rect x="1246.75" y="201" width="2.5" height="10" fill="#5f6a78"/><rect x="1501.55" y="201" width="2.5" height="10" fill="#5f6a78"/><rect x="1756.35" y="201" width="2.5" height="10" fill="#5f6a78"/><rect x="2011.15" y="201" width="2.5" height="10" fill="#5f6a78"/><rect x="2265.95" y="201" width="2.5" height="10" fill="#5f6a78"/><rect x="2520.75" y="201" width="2.5" height="10" fill="#5f6a78"/><rect x="2775.55" y="201" width="2.5" height="10" fill="#5f6a78"/><rect x="3030.35" y="201" width="2.5" height="10" fill="#5f6a78"/><rect x="3285.15" y="201" width="2.5" height="10" fill="#5f6a78"/><rect x="3539.95" y="201" width="2.5" height="10" fill="#5f6a78"/></svg>
<div id="t27" style="position:absolute;top:769.53px;font-size:23.00px;line-height:23.00px;color:#1c292f;font-weight:400;white-space:nowrap;letter-spacing:-0.390px;right:3624.39px;"><span>200</span></div>
<div id="t28" style="position:absolute;top:890.03px;font-size:23.00px;line-height:23.00px;color:#1c292f;font-weight:400;white-space:nowrap;letter-spacing:0.000px;right:3624.00px;"><span>0</span></div>
<div id="t29" style="position:absolute;top:914.53px;font-size:23.00px;line-height:23.00px;color:#1c292f;font-weight:400;white-space:nowrap;letter-spacing:-0.527px;left:452.80px;width:0;display:flex;justify-content:center;"><span>Sat 8</span></div>
<div id="t30" style="position:absolute;top:914.53px;font-size:23.00px;line-height:23.00px;color:#1c292f;font-weight:400;white-space:nowrap;letter-spacing:-0.237px;left:707.60px;width:0;display:flex;justify-content:center;"><span>12:00</span></div>
<div id="t31" style="position:absolute;top:914.53px;font-size:23.00px;line-height:23.00px;color:#1c292f;font-weight:400;white-space:nowrap;letter-spacing:0.000px;left:962.40px;width:0;display:flex;justify-content:center;"><span>Jun 9</span></div>
<div id="t32" style="position:absolute;top:914.53px;font-size:23.00px;line-height:23.00px;color:#1c292f;font-weight:400;white-space:nowrap;letter-spacing:-0.237px;left:1217.20px;width:0;display:flex;justify-content:center;"><span>12:00</span></div>
<div id="t33" style="position:absolute;top:914.53px;font-size:23.00px;line-height:23.00px;color:#1c292f;font-weight:400;white-space:nowrap;letter-spacing:0.000px;left:1472.00px;width:0;display:flex;justify-content:center;"><span>Mon 10</span></div>
<div id="t34" style="position:absolute;top:914.53px;font-size:23.00px;line-height:23.00px;color:#1c292f;font-weight:400;white-space:nowrap;letter-spacing:-0.237px;left:1726.80px;width:0;display:flex;justify-content:center;"><span>12:00</span></div>
<div id="t35" style="position:absolute;top:914.53px;font-size:23.00px;line-height:23.00px;color:#1c292f;font-weight:400;white-space:nowrap;letter-spacing:0.000px;left:1981.60px;width:0;display:flex;justify-content:center;"><span>Tue 11</span></div>
<div id="t36" style="position:absolute;top:914.53px;font-size:23.00px;line-height:23.00px;color:#1c292f;font-weight:400;white-space:nowrap;letter-spacing:-0.237px;left:2236.40px;width:0;display:flex;justify-content:center;"><span>12:00</span></div>
<div id="t37" style="position:absolute;top:914.53px;font-size:23.00px;line-height:23.00px;color:#1c292f;font-weight:400;white-space:nowrap;letter-spacing:0.000px;left:2491.20px;width:0;display:flex;justify-content:center;"><span>Wed 12</span></div>
<div id="t38" style="position:absolute;top:914.53px;font-size:23.00px;line-height:23.00px;color:#1c292f;font-weight:400;white-space:nowrap;letter-spacing:-0.237px;left:2746.00px;width:0;display:flex;justify-content:center;"><span>12:00</span></div>
<div id="t39" style="position:absolute;top:914.53px;font-size:23.00px;line-height:23.00px;color:#1c292f;font-weight:400;white-space:nowrap;letter-spacing:0.000px;left:3000.80px;width:0;display:flex;justify-content:center;"><span>Thu 13</span></div>
<div id="t40" style="position:absolute;top:914.53px;font-size:23.00px;line-height:23.00px;color:#1c292f;font-weight:400;white-space:nowrap;letter-spacing:-0.237px;left:3255.60px;width:0;display:flex;justify-content:center;"><span>12:00</span></div>
<div id="t41" style="position:absolute;top:914.53px;font-size:23.00px;line-height:23.00px;color:#1c292f;font-weight:400;white-space:nowrap;letter-spacing:0.000px;left:3510.40px;width:0;display:flex;justify-content:center;"><span>Fri 14</span></div>
<div id="t42" style="position:absolute;top:914.53px;font-size:23.00px;line-height:23.00px;color:#1c292f;font-weight:400;white-space:nowrap;letter-spacing:-0.237px;left:3765.20px;width:0;display:flex;justify-content:center;"><span>12:00</span></div>
<div style="position:absolute;left:224.00px;top:975.00px;width:24.00px;height:24.00px;background:#e52b3e;border-radius:5px;"></div>
<div id="t43" style="position:absolute;top:974.68px;font-size:24.00px;line-height:24.00px;color:#1c292f;font-weight:400;white-space:nowrap;letter-spacing:0.260px;left:262.00px;"><span>Failed</span></div>
<div style="position:absolute;left:364.00px;top:975.00px;width:24.00px;height:24.00px;background:#8bd694;border-radius:5px;"></div>
<div id="t44" style="position:absolute;top:974.68px;font-size:24.00px;line-height:24.00px;color:#1c292f;font-weight:400;white-space:nowrap;letter-spacing:-0.338px;left:402.00px;"><span>Success</span></div>
<div style="position:absolute;left:148.00px;top:1017.00px;width:3654.00px;height:2.00px;background:#dde1e6;"></div>
<div style="position:absolute;left:148.00px;top:1019.00px;width:3654.00px;height:99.00px;background:#f5f7f7;"></div>
<div style="position:absolute;left:148.00px;top:1117.00px;width:3654.00px;height:2.00px;background:#dde1e6;"></div>
<div style="position:absolute;left:165.50px;top:1047.00px;width:578.50px;height:43.00px;background:#fff;border:2px solid #c3c6d6;border-radius:8px;box-sizing:border-box;"></div>
<div style="position:absolute;left:165.5px;top:1047px;width:57px;height:43px;background:#e8f2fc;border:2px solid #2a73c9;border-radius:8px 0 0 8px;box-sizing:border-box;"></div>
<div style="position:absolute;left:442.50px;top:1048.00px;width:2.00px;height:41.00px;background:#c3c6d6;"></div>
<div id="t45" style="position:absolute;top:1054.69px;font-size:26.00px;line-height:26.00px;color:#1262bf;font-weight:400;white-space:nowrap;letter-spacing:-0.539px;left:180.00px;"><span>All</span></div>
<svg style="position:absolute;left:236.00px;top:1054.00px;" width="28" height="28" viewBox="0 0 28 28"><g fill="none" stroke="#6b7176" stroke-width="1.8"><path d="M3 9 L14 3 L25 9 L14 15Z"/><path d="M3 14 L14 20 L25 14"/><path d="M3 19 L14 25 L25 19"/></g></svg>
<div id="t46" style="position:absolute;top:1054.69px;font-size:26.00px;line-height:26.00px;color:#1c292f;font-weight:400;white-space:nowrap;letter-spacing:-0.446px;left:275.80px;"><span>Databricks (6)</span></div>
<svg style="position:absolute;left:458.00px;top:1054.00px;" width="28" height="28" viewBox="0 0 28 28"><path d="M8 17 L3 14.5 L10 11.5 L13 4 L17 10.5 L25 9.5 L19.5 15.5 L22 23 L16 21.5" fill="none" stroke="#6b7176" stroke-width="2.8" stroke-linejoin="round" stroke-linecap="round"/></svg>
<div id="t47" style="position:absolute;top:1054.69px;font-size:26.00px;line-height:26.00px;color:#1c292f;font-weight:400;white-space:nowrap;letter-spacing:-0.305px;left:497.00px;"><span>Spark Application (4)</span></div>
<div id="t48" style="position:absolute;top:1054.60px;font-size:30.00px;line-height:30.00px;color:#1c292f;font-weight:400;white-space:nowrap;letter-spacing:-0.379px;left:763.50px;"><span>Showing <b>1–10</b> of <b>10</b> Jobs</span></div>
<svg style="position:absolute;left:3739.00px;top:1052.00px;" width="31" height="31" viewBox="0 0 31 31"><path d="M15.5 2 L18.5 2 L19.5 6.5 L23 8.5 L27.5 7 L29 9.5 L26 13 V18 L29 21.5 L27.5 24 L23 22.5 L19.5 24.5 L18.5 29 H12.5 L11.5 24.5 L8 22.5 L3.5 24 L2 21.5 L5 18 V13 L2 9.5 L3.5 7 L8 8.5 L11.5 6.5 L12.5 2Z" fill="#6b7378"/><circle cx="15.5" cy="15.5" r="5" fill="#f5f7f7"/></svg>
<div id="t49" style="position:absolute;top:1135.99px;font-size:26.00px;line-height:26.00px;color:#1c292f;font-weight:700;white-space:nowrap;letter-spacing:-0.910px;left:163.50px;"><span>TYPE</span></div>
<div id="t50" style="position:absolute;top:1135.99px;font-size:26.00px;line-height:26.00px;color:#1c292f;font-weight:700;white-space:nowrap;letter-spacing:0.587px;left:333.00px;"><span>NAME</span></div>
<div id="t51" style="position:absolute;top:1135.99px;font-size:26.00px;line-height:26.00px;color:#1c292f;font-weight:700;white-space:nowrap;letter-spacing:0.453px;left:930.00px;"><span>MONITORS</span></div>
<div id="t52" style="position:absolute;top:1135.99px;font-size:26.00px;line-height:26.00px;color:#1c292f;font-weight:700;white-space:nowrap;letter-spacing:-0.910px;left:1194.00px;"><span>LAST STATUS</span></div>
<div id="t53" style="position:absolute;top:1135.99px;font-size:26.00px;line-height:26.00px;color:#1c292f;font-weight:700;white-space:nowrap;letter-spacing:-0.381px;left:1519.70px;"><span>LAST DURATION</span></div>
<svg style="position:absolute;left:1964.00px;top:1132.00px;" width="26" height="30" viewBox="0 0 26 30"><path d="M13 2 V27 M3 17 L13 27 L23 17" fill="none" stroke="#1e2a33" stroke-width="2.8"/></svg>
<div id="t54" style="position:absolute;top:1135.99px;font-size:26.00px;line-height:26.00px;color:#1c292f;font-weight:700;white-space:nowrap;letter-spacing:-0.792px;left:2005.00px;"><span>JOB RUNS</span></div>
<div id="t55" style="position:absolute;top:1135.99px;font-size:26.00px;line-height:26.00px;color:#1c292f;font-weight:700;white-space:nowrap;letter-spacing:-0.910px;left:2328.00px;"><span>FAILURE RATE</span></div>
<div id="t56" style="position:absolute;top:1135.99px;font-size:26.00px;line-height:26.00px;color:#1c292f;font-weight:700;white-space:nowrap;letter-spacing:0.082px;left:2745.70px;"><span>AVG DURATION</span></div>
<div id="t57" style="position:absolute;top:1135.99px;font-size:26.00px;line-height:26.00px;color:#1c292f;font-weight:700;white-space:nowrap;letter-spacing:-0.529px;left:2975.00px;"><span>% CHANGE</span></div>
<div id="t58" style="position:absolute;top:1135.99px;font-size:26.00px;line-height:26.00px;color:#1c292f;font-weight:700;white-space:nowrap;letter-spacing:-0.419px;left:3298.00px;"><span>IDLE CPU</span></div>
<div id="t59" style="position:absolute;top:1135.99px;font-size:26.00px;line-height:26.00px;color:#1c292f;font-weight:700;white-space:nowrap;letter-spacing:-0.910px;left:3670.00px;"><span>EST COST</span></div>
<div style="position:absolute;left:1139.50px;top:1119.00px;width:2.50px;height:867.00px;background:#dde1e6;"></div>
<div style="position:absolute;left:1776.50px;top:1119.00px;width:2.50px;height:867.00px;background:#dde1e6;"></div>
<div style="position:absolute;left:3205.50px;top:1119.00px;width:2.50px;height:867.00px;background:#dde1e6;"></div>
<div style="position:absolute;left:148.00px;top:1283.70px;width:3654.00px;height:2.00px;background:#dde1e6;"></div>
<svg style="position:absolute;left:163.00px;top:1206.00px;" width="52" height="52" viewBox="0 0 52 52"><rect width="52" height="52" rx="8" fill="#f8a51d"/><path d="M14.5 32.6 L7.1 28.4 L20.2 22.6 L23.4 11.0 L29.7 21.0 L43.4 17.3 L33.9 28.9 L39.2 39.4 L30.2 37.3" fill="none" stroke="#111" stroke-width="3.8" stroke-linejoin="round" stroke-linecap="round"/></svg>
<div id="t60" style="position:absolute;top:1216.95px;font-size:29.00px;line-height:29.00px;color:#1c292f;font-weight:400;white-space:nowrap;letter-spacing:0.983px;left:333.00px;"><span>volume-shipping-job</span></div>
<div style="position:absolute;left:895.00px;top:1210.00px;width:194.00px;height:43.50px;background:#e5283d;border-radius:7px;"></div>
<div id="t61" style="position:absolute;top:1219.83px;font-size:25.00px;line-height:25.00px;color:#fff;font-weight:700;white-space:nowrap;letter-spacing:-0.875px;left:992.00px;width:0;display:flex;justify-content:center;"><span>1 ALERT</span></div>
<div style="position:absolute;left:1189.70px;top:1210.00px;width:185.70px;height:43.50px;background:#e6f6e8;border-radius:8px;"></div>
<div id="t62" style="position:absolute;top:1219.83px;font-size:25.00px;line-height:25.00px;color:#1f7a36;font-weight:700;white-space:nowrap;letter-spacing:-0.875px;left:1282.50px;width:0;display:flex;justify-content:center;"><span>OK</span></div>
<div id="t63" style="position:absolute;top:1217.45px;font-size:29.00px;line-height:29.00px;color:#1c292f;font-weight:400;white-space:nowrap;letter-spacing:0.422px;right:2115.58px;"><span>3 min 0 s</span></div>
<div id="t64" style="position:absolute;top:1211.95px;font-size:29.00px;line-height:29.00px;color:#1c292f;font-weight:400;white-space:nowrap;letter-spacing:1.133px;right:1706.37px;"><span>11.5k</span></div>
<div style="position:absolute;left:2001.00px;top:1245.00px;width:131.80px;height:12.50px;background:#dde1e8;"></div>
<div style="position:absolute;left:2001.00px;top:1245.00px;width:131.80px;height:12.50px;background:#368de3;"></div>
<div id="t65" style="position:absolute;top:1211.95px;font-size:29.00px;line-height:29.00px;color:#1c292f;font-weight:400;white-space:nowrap;letter-spacing:-0.596px;right:1336.60px;"><span>0%</span></div>
<div style="position:absolute;left:2372.00px;top:1245.00px;width:131.80px;height:12.50px;background:#dde1e8;"></div>
<div id="t66" style="position:absolute;top:1217.45px;font-size:29.00px;line-height:29.00px;color:#1c292f;font-weight:400;white-space:nowrap;letter-spacing:0.297px;right:1076.10px;"><span>3 min 0 s</span></div>
<svg style="position:absolute;left:2800.00px;top:1213.50px;overflow:visible;" width="146" height="40" viewBox="0 0 146 40"><path d="M0,37.50 L0.00,5.50 L121.00,5.50 L126.00,37.50 L143.00,37.50 L143.00,37.50 Z" fill="#a3cffa"/><polyline points="0.00,5.50 121.00,5.50 126.00,37.50 143.00,37.50" fill="none" stroke="#2a85e4" stroke-width="2" stroke-linejoin="round"/><rect x="0" y="36.50" width="143" height="2" fill="#5b6876"/><circle cx="121.40" cy="5.70" r="3.4" fill="#1b1f24"/></svg>
<div id="t67" style="position:absolute;top:1212.87px;font-size:22.00px;line-height:22.00px;color:#1c292f;font-weight:400;white-space:nowrap;letter-spacing:1.333px;left:2802.00px;text-shadow:0 0 2px #fff,0 0 2px #fff;"><span>3 min</span></div>
<div style="position:absolute;left:2974.70px;top:1206.50px;width:106.00px;height:51.50px;background:#e8ebef;border-radius:8px;"></div>
<div id="t68" style="position:absolute;top:1219.99px;font-size:26.00px;line-height:26.00px;color:#4f5762;font-weight:700;white-space:nowrap;letter-spacing:0.300px;left:2988.00px;"><span>0 % </span></div>
<div style="position:absolute;left:3039.70px;top:1230.00px;width:22.00px;height:3.00px;background:#4f5762;"></div>
<div id="t69" style="position:absolute;top:1217.45px;font-size:29.00px;line-height:29.00px;color:#1c292f;font-weight:400;white-space:nowrap;letter-spacing:-0.801px;right:443.80px;"><span>1.73%</span></div>
<div id="t70" style="position:absolute;top:1211.95px;font-size:29.00px;line-height:29.00px;color:#1c292f;font-weight:400;white-space:nowrap;letter-spacing:0.201px;right:53.20px;"><span>$3,643.84</span></div>
<div style="position:absolute;left:3655.00px;top:1245.50px;width:132.00px;height:12.50px;background:#368de3;"></div>
<div style="position:absolute;left:148.00px;top:1389.40px;width:3654.00px;height:2.00px;background:#dde1e6;"></div>
<svg style="position:absolute;left:163.00px;top:1311.70px;" width="52" height="52" viewBox="0 0 52 52"><rect width="52" height="52" rx="8" fill="#98ad3b"/><path d="M14.5 32.6 L7.1 28.4 L20.2 22.6 L23.4 11.0 L29.7 21.0 L43.4 17.3 L33.9 28.9 L39.2 39.4 L30.2 37.3" fill="none" stroke="#fff" stroke-width="3.8" stroke-linejoin="round" stroke-linecap="round"/></svg>
<div id="t71" style="position:absolute;top:1322.65px;font-size:29.00px;line-height:29.00px;color:#1c292f;font-weight:400;white-space:nowrap;letter-spacing:0.689px;left:333.00px;"><span>product-insights</span></div>
<div style="position:absolute;left:895.00px;top:1315.70px;width:194.00px;height:43.50px;background:#e5283d;border-radius:7px;"></div>
<div id="t72" style="position:absolute;top:1325.53px;font-size:25.00px;line-height:25.00px;color:#fff;font-weight:700;white-space:nowrap;letter-spacing:-0.875px;left:992.00px;width:0;display:flex;justify-content:center;"><span>2 ALERT</span></div>
<div style="position:absolute;left:1189.70px;top:1315.70px;width:185.70px;height:43.50px;background:#fce6e8;border-radius:8px;"></div>
<div id="t73" style="position:absolute;top:1325.53px;font-size:25.00px;line-height:25.00px;color:#b8263a;font-weight:700;white-space:nowrap;letter-spacing:-0.875px;left:1282.50px;width:0;display:flex;justify-content:center;"><span>ERROR</span></div>
<div id="t74" style="position:absolute;top:1323.15px;font-size:29.00px;line-height:29.00px;color:#1c292f;font-weight:400;white-space:nowrap;letter-spacing:-0.334px;right:2116.33px;"><span>52.4 s</span></div>
<div id="t75" style="position:absolute;top:1317.65px;font-size:29.00px;line-height:29.00px;color:#1c292f;font-weight:400;white-space:nowrap;letter-spacing:0.593px;right:1706.91px;"><span>2.00k</span></div>
<div style="position:absolute;left:2001.00px;top:1350.70px;width:131.80px;height:12.50px;background:#dde1e8;"></div>
<div style="position:absolute;left:2001.00px;top:1350.70px;width:22.93px;height:12.50px;background:#368de3;"></div>
<div id="t76" style="position:absolute;top:1317.65px;font-size:29.00px;line-height:29.00px;color:#1c292f;font-weight:400;white-space:nowrap;letter-spacing:-0.051px;right:1336.05px;"><span>30.6%</span></div>
<div style="position:absolute;left:2372.00px;top:1350.70px;width:131.80px;height:12.50px;background:#dde1e8;"></div>
<div style="position:absolute;left:2372.00px;top:1350.70px;width:40.33px;height:12.50px;background:#e5283d;"></div>
<div id="t77" style="position:absolute;top:1323.15px;font-size:29.00px;line-height:29.00px;color:#1c292f;font-weight:400;white-space:nowrap;letter-spacing:-0.274px;right:1076.67px;"><span>27.4 s</span></div>
<svg style="position:absolute;left:2800.00px;top:1319.20px;overflow:visible;" width="146" height="40" viewBox="0 0 146 40"><path d="M0,37.50 L0.02,26.85 L17.83,27.64 L20.98,25.28 L27.29,26.06 L32.02,22.91 L39.90,22.12 L44.63,24.49 L49.36,21.34 L53.30,29.22 L57.24,21.34 L61.97,14.24 L65.91,12.67 L74.58,13.45 L77.73,10.30 L80.88,18.18 L90.34,16.61 L99.80,15.82 L104.53,23.70 L121.87,23.70 L132.90,22.12 L135.26,21.34 L138.42,9.51 L140.78,5.57 L140.78,37.50 Z" fill="#a3cffa"/><polyline points="0.02,26.85 17.83,27.64 20.98,25.28 27.29,26.06 32.02,22.91 39.90,22.12 44.63,24.49 49.36,21.34 53.30,29.22 57.24,21.34 61.97,14.24 65.91,12.67 74.58,13.45 77.73,10.30 80.88,18.18 90.34,16.61 99.80,15.82 104.53,23.70 121.87,23.70 132.90,22.12 135.26,21.34 138.42,9.51 140.78,5.57" fill="none" stroke="#2a85e4" stroke-width="2" stroke-linejoin="round"/><rect x="0" y="36.50" width="143" height="2" fill="#5b6876"/><circle cx="142.50" cy="1.50" r="3.4" fill="#1b1f24"/></svg>
<div id="t78" style="position:absolute;top:1318.57px;font-size:22.00px;line-height:22.00px;color:#1c292f;font-weight:400;white-space:nowrap;letter-spacing:0.128px;left:2802.00px;text-shadow:0 0 2px #fff,0 0 2px #fff;"><span>52.79 s</span></div>
<div style="position:absolute;left:2974.70px;top:1312.20px;width:121.00px;height:51.50px;background:#fce6e8;border-radius:8px;"></div>
<div id="t79" style="position:absolute;top:1325.69px;font-size:26.00px;line-height:26.00px;color:#b8263a;font-weight:700;white-space:nowrap;letter-spacing:0.381px;left:2988.00px;"><span>60 % </span></div>
<svg style="position:absolute;left:3053.70px;top:1324.20px;" width="26" height="26" viewBox="0 0 26 26"><path d="M3 22 L21 4 M8 4 H21 V17" fill="none" stroke="#b8263a" stroke-width="3"/></svg>
<div style="position:absolute;left:3221.00px;top:1285.70px;width:195.00px;height:103.00px;background:#f5930a;"></div>
<div id="t80" style="position:absolute;top:1323.15px;font-size:29.00px;line-height:29.00px;color:#fff;font-weight:400;white-space:nowrap;letter-spacing:-0.376px;right:443.38px;"><span>90.0%</span></div>
<div id="t81" style="position:absolute;top:1317.65px;font-size:29.00px;line-height:29.00px;color:#1c292f;font-weight:400;white-space:nowrap;letter-spacing:0.311px;right:53.09px;"><span>$0.84</span></div>
<div style="position:absolute;left:3655.00px;top:1351.20px;width:132.00px;height:12.50px;background:#dde1e8;"></div>
<div style="position:absolute;left:148.00px;top:1495.10px;width:3654.00px;height:2.00px;background:#dde1e6;"></div>
<svg style="position:absolute;left:163.00px;top:1417.40px;" width="52" height="52" viewBox="0 0 52 52"><rect width="52" height="52" rx="8" fill="#c9336f"/><path d="M14.5 32.6 L7.1 28.4 L20.2 22.6 L23.4 11.0 L29.7 21.0 L43.4 17.3 L33.9 28.9 L39.2 39.4 L30.2 37.3" fill="none" stroke="#fff" stroke-width="3.8" stroke-linejoin="round" stroke-linecap="round"/></svg>
<div id="t82" style="position:absolute;top:1428.35px;font-size:29.00px;line-height:29.00px;color:#1c292f;font-weight:400;white-space:nowrap;letter-spacing:0.736px;left:333.00px;"><span>spark-pi</span></div>
<div style="position:absolute;left:895.00px;top:1421.40px;width:194.00px;height:43.50px;background:#e5283d;border-radius:7px;"></div>
<div id="t83" style="position:absolute;top:1431.23px;font-size:25.00px;line-height:25.00px;color:#fff;font-weight:700;white-space:nowrap;letter-spacing:-0.875px;left:992.00px;width:0;display:flex;justify-content:center;"><span>1 ALERT</span></div>
<div style="position:absolute;left:1189.70px;top:1421.40px;width:185.70px;height:43.50px;background:#e6f6e8;border-radius:8px;"></div>
<div id="t84" style="position:absolute;top:1431.23px;font-size:25.00px;line-height:25.00px;color:#1f7a36;font-weight:700;white-space:nowrap;letter-spacing:-0.875px;left:1282.50px;width:0;display:flex;justify-content:center;"><span>OK</span></div>
<div id="t85" style="position:absolute;top:1428.85px;font-size:29.00px;line-height:29.00px;color:#1c292f;font-weight:400;white-space:nowrap;letter-spacing:0.085px;right:2115.91px;"><span>13.8 s</span></div>
<div id="t86" style="position:absolute;top:1423.35px;font-size:29.00px;line-height:29.00px;color:#1c292f;font-weight:400;white-space:nowrap;letter-spacing:0.096px;right:1707.40px;"><span>1.96k</span></div>
<div style="position:absolute;left:2001.00px;top:1456.40px;width:131.80px;height:12.50px;background:#dde1e8;"></div>
<div style="position:absolute;left:2001.00px;top:1456.40px;width:22.41px;height:12.50px;background:#368de3;"></div>
<div id="t87" style="position:absolute;top:1423.35px;font-size:29.00px;line-height:29.00px;color:#1c292f;font-weight:400;white-space:nowrap;letter-spacing:0.221px;right:1335.78px;"><span>0%</span></div>
<div style="position:absolute;left:2372.00px;top:1456.40px;width:131.80px;height:12.50px;background:#dde1e8;"></div>
<div id="t88" style="position:absolute;top:1428.85px;font-size:29.00px;line-height:29.00px;color:#1c292f;font-weight:400;white-space:nowrap;letter-spacing:0.085px;right:1076.32px;"><span>13.9 s</span></div>
<svg style="position:absolute;left:2800.00px;top:1424.90px;overflow:visible;" width="146" height="40" viewBox="0 0 146 40"><path d="M0,37.50 L0.20,9.40 L27.30,8.10 L58.30,11.20 L77.00,10.30 L80.70,14.10 L89.40,11.60 L101.80,10.00 L123.50,8.50 L139.00,9.70 L141.90,37.00 L141.90,37.50 Z" fill="#a3cffa"/><polyline points="0.20,9.40 27.30,8.10 58.30,11.20 77.00,10.30 80.70,14.10 89.40,11.60 101.80,10.00 123.50,8.50 139.00,9.70 141.90,37.00" fill="none" stroke="#2a85e4" stroke-width="2" stroke-linejoin="round"/><rect x="0" y="36.50" width="143" height="2" fill="#5b6876"/></svg>
<div id="t89" style="position:absolute;top:1424.27px;font-size:22.00px;line-height:22.00px;color:#1c292f;font-weight:400;white-space:nowrap;letter-spacing:0.664px;left:2802.00px;text-shadow:0 0 2px #fff,0 0 2px #fff;"><span>15.98 s</span></div>
<div style="position:absolute;left:2974.70px;top:1417.90px;width:107.00px;height:51.50px;background:#fce6e8;border-radius:8px;"></div>
<div id="t90" style="position:absolute;top:1431.39px;font-size:26.00px;line-height:26.00px;color:#b8263a;font-weight:700;white-space:nowrap;letter-spacing:0.340px;left:2988.00px;"><span>8 % </span></div>
<svg style="position:absolute;left:3039.70px;top:1429.90px;" width="26" height="26" viewBox="0 0 26 26"><path d="M3 22 L21 4 M8 4 H21 V17" fill="none" stroke="#b8263a" stroke-width="3"/></svg>
<div style="position:absolute;left:3221.00px;top:1391.40px;width:195.00px;height:103.00px;background:#f5930a;"></div>
<div id="t91" style="position:absolute;top:1428.85px;font-size:29.00px;line-height:29.00px;color:#fff;font-weight:400;white-space:nowrap;letter-spacing:0.111px;right:442.89px;"><span>65.8%</span></div>
<div id="t92" style="position:absolute;top:1423.35px;font-size:29.00px;line-height:29.00px;color:#1c292f;font-weight:400;white-space:nowrap;letter-spacing:0.098px;right:53.30px;"><span>$0.21</span></div>
<div style="position:absolute;left:3655.00px;top:1456.90px;width:132.00px;height:12.50px;background:#dde1e8;"></div>
<div style="position:absolute;left:148.00px;top:1600.80px;width:3654.00px;height:2.00px;background:#dde1e6;"></div>
<svg style="position:absolute;left:163.00px;top:1523.10px;" width="52" height="52" viewBox="0 0 52 52"><rect width="52" height="52" rx="8" fill="#c8686f"/><path d="M7.6 18.4 L25.5 8.7 L39.1 16.0 M7.6 18.4 L25.5 28.4 L43.1 18.4 L43.1 25.1 L25.5 35.0 L8.4 25.5 L8.4 31.5 L25.5 41.2 L43.1 31.5 L43.1 37.7 L25.5 47.4 L7.9 37.3" fill="none" stroke="#fff" stroke-width="1.9"/></svg>
<div id="t93" style="position:absolute;top:1534.05px;font-size:29.00px;line-height:29.00px;color:#1c292f;font-weight:400;white-space:nowrap;letter-spacing:0.687px;left:333.00px;"><span>nyc_taxi_trips</span></div>
<div style="position:absolute;left:895.00px;top:1527.10px;width:194.00px;height:43.50px;background:#e6f6e8;border-radius:7px;"></div>
<div id="t94" style="position:absolute;top:1536.93px;font-size:25.00px;line-height:25.00px;color:#1f7a36;font-weight:700;white-space:nowrap;letter-spacing:-0.875px;left:992.00px;width:0;display:flex;justify-content:center;"><span>1 OK</span></div>
<div style="position:absolute;left:1189.70px;top:1527.10px;width:185.70px;height:43.50px;background:#fce6e8;border-radius:8px;"></div>
<div id="t95" style="position:absolute;top:1536.93px;font-size:25.00px;line-height:25.00px;color:#b8263a;font-weight:700;white-space:nowrap;letter-spacing:-0.875px;left:1282.50px;width:0;display:flex;justify-content:center;"><span>ERROR</span></div>
<div id="t96" style="position:absolute;top:1534.55px;font-size:29.00px;line-height:29.00px;color:#1c292f;font-weight:400;white-space:nowrap;letter-spacing:0.085px;right:2115.91px;"><span>36.0 s</span></div>
<div id="t97" style="position:absolute;top:1529.05px;font-size:29.00px;line-height:29.00px;color:#1c292f;font-weight:400;white-space:nowrap;letter-spacing:0.129px;right:1707.37px;"><span>337</span></div>
<div style="position:absolute;left:2001.00px;top:1562.10px;width:131.80px;height:12.50px;background:#dde1e8;"></div>
<div style="position:absolute;left:2001.00px;top:1562.10px;width:3.95px;height:12.50px;background:#368de3;"></div>
<div id="t98" style="position:absolute;top:1529.05px;font-size:29.00px;line-height:29.00px;color:#1c292f;font-weight:400;white-space:nowrap;letter-spacing:0.133px;right:1335.87px;"><span>100%</span></div>
<div style="position:absolute;left:2372.00px;top:1562.10px;width:131.80px;height:12.50px;background:#dde1e8;"></div>
<div style="position:absolute;left:2372.00px;top:1562.10px;width:131.80px;height:12.50px;background:#e5283d;"></div>
<div id="t99" style="position:absolute;top:1534.55px;font-size:29.00px;line-height:29.00px;color:#1c292f;font-weight:400;white-space:nowrap;letter-spacing:0.085px;right:1076.32px;"><span>41.8 s</span></div>
<svg style="position:absolute;left:2800.00px;top:1530.60px;overflow:visible;" width="146" height="40" viewBox="0 0 146 40"><path d="M0,37.50 L0.25,10.55 L29.75,7.75 L45.90,13.65 L60.20,7.40 L64.50,8.70 L75.70,8.40 L86.30,11.80 L90.60,8.10 L101.80,6.80 L104.30,7.10 L108.00,11.50 L115.50,8.10 L121.70,15.50 L131.60,5.60 L136.60,9.00 L142.20,12.40 L142.20,37.50 Z" fill="#a3cffa"/><polyline points="0.25,10.55 29.75,7.75 45.90,13.65 60.20,7.40 64.50,8.70 75.70,8.40 86.30,11.80 90.60,8.10 101.80,6.80 104.30,7.10 108.00,11.50 115.50,8.10 121.70,15.50 131.60,5.60 136.60,9.00 142.20,12.40" fill="none" stroke="#2a85e4" stroke-width="2" stroke-linejoin="round"/><rect x="0" y="36.50" width="143" height="2" fill="#5b6876"/><circle cx="131.60" cy="5.60" r="3.4" fill="#1b1f24"/></svg>
<div id="t100" style="position:absolute;top:1529.97px;font-size:22.00px;line-height:22.00px;color:#1c292f;font-weight:400;white-space:nowrap;letter-spacing:0.664px;left:2802.00px;text-shadow:0 0 2px #fff,0 0 2px #fff;"><span>49.37 s</span></div>
<div style="position:absolute;left:2974.70px;top:1523.60px;width:107.00px;height:51.50px;background:#e6f6e8;border-radius:8px;"></div>
<div id="t101" style="position:absolute;top:1537.09px;font-size:26.00px;line-height:26.00px;color:#1f7a36;font-weight:700;white-space:nowrap;letter-spacing:0.340px;left:2988.00px;"><span>3 % </span></div>
<svg style="position:absolute;left:3039.70px;top:1535.60px;" width="26" height="26" viewBox="0 0 26 26"><path d="M3 4 L21 22 M21 9 V22 H8" fill="none" stroke="#1f7a36" stroke-width="3"/></svg>
<div id="t102" style="position:absolute;top:1534.55px;font-size:29.00px;line-height:29.00px;color:#1063c1;font-weight:400;white-space:nowrap;letter-spacing:1.006px;right:91.99px;"><span>Instrument Cluster</span></div>
<svg style="position:absolute;left:3760.00px;top:1533.60px;" width="27" height="27" viewBox="0 0 27 27"><path d="M11 4 H4 V23 H23 V16 M15 4 H23 V12 M23 4 L12 15" fill="none" stroke="#1063c1" stroke-width="2.8"/></svg>
<div style="position:absolute;left:148.00px;top:1706.50px;width:3654.00px;height:2.00px;background:#dde1e6;"></div>
<svg style="position:absolute;left:163.00px;top:1628.80px;" width="52" height="52" viewBox="0 0 52 52"><rect width="52" height="52" rx="8" fill="#fdc414"/><path d="M7.6 18.4 L25.5 8.7 L39.1 16.0 M7.6 18.4 L25.5 28.4 L43.1 18.4 L43.1 25.1 L25.5 35.0 L8.4 25.5 L8.4 31.5 L25.5 41.2 L43.1 31.5 L43.1 37.7 L25.5 47.4 L7.9 37.3" fill="none" stroke="#111" stroke-width="1.9"/></svg>
<div id="t103" style="position:absolute;top:1639.75px;font-size:29.00px;line-height:29.00px;color:#1c292f;font-weight:400;white-space:nowrap;letter-spacing:0.754px;left:333.00px;"><span>pricing_summary_report</span></div>
<div style="position:absolute;left:895.00px;top:1632.80px;width:194.00px;height:43.50px;background:#e6f6e8;border-radius:7px;"></div>
<div id="t104" style="position:absolute;top:1642.63px;font-size:25.00px;line-height:25.00px;color:#1f7a36;font-weight:700;white-space:nowrap;letter-spacing:-0.875px;left:992.00px;width:0;display:flex;justify-content:center;"><span>1 OK</span></div>
<div style="position:absolute;left:1189.70px;top:1632.80px;width:185.70px;height:43.50px;background:#e6f6e8;border-radius:8px;"></div>
<div id="t105" style="position:absolute;top:1642.63px;font-size:25.00px;line-height:25.00px;color:#1f7a36;font-weight:700;white-space:nowrap;letter-spacing:-0.875px;left:1282.50px;width:0;display:flex;justify-content:center;"><span>OK</span></div>
<div id="t106" style="position:absolute;top:1640.25px;font-size:29.00px;line-height:29.00px;color:#1c292f;font-weight:400;white-space:nowrap;letter-spacing:0.080px;right:2115.92px;"><span>3 min 2 s</span></div>
<div id="t107" style="position:absolute;top:1634.75px;font-size:29.00px;line-height:29.00px;color:#1c292f;font-weight:400;white-space:nowrap;letter-spacing:0.129px;right:1707.37px;"><span>336</span></div>
<div style="position:absolute;left:2001.00px;top:1667.80px;width:131.80px;height:12.50px;background:#dde1e8;"></div>
<div style="position:absolute;left:2001.00px;top:1667.80px;width:3.95px;height:12.50px;background:#368de3;"></div>
<div id="t108" style="position:absolute;top:1634.75px;font-size:29.00px;line-height:29.00px;color:#1c292f;font-weight:400;white-space:nowrap;letter-spacing:0.111px;right:1335.89px;"><span>50.0%</span></div>
<div style="position:absolute;left:2372.00px;top:1667.80px;width:131.80px;height:12.50px;background:#dde1e8;"></div>
<div style="position:absolute;left:2372.00px;top:1667.80px;width:65.90px;height:12.50px;background:#e5283d;"></div>
<div id="t109" style="position:absolute;top:1640.25px;font-size:29.00px;line-height:29.00px;color:#1c292f;font-weight:400;white-space:nowrap;letter-spacing:0.081px;right:1076.32px;"><span>2 min 49 s</span></div>
<svg style="position:absolute;left:2800.00px;top:1636.30px;overflow:visible;" width="146" height="40" viewBox="0 0 146 40"><path d="M0,37.50 L0.25,7.05 L8.60,8.30 L21.10,5.80 L33.50,8.00 L45.90,6.10 L58.30,6.70 L77.00,7.05 L91.90,6.70 L96.80,5.50 L106.80,9.50 L111.70,7.40 L119.20,9.50 L126.60,5.80 L132.90,6.10 L139.10,7.70 L141.60,7.05 L141.60,37.50 Z" fill="#a3cffa"/><polyline points="0.25,7.05 8.60,8.30 21.10,5.80 33.50,8.00 45.90,6.10 58.30,6.70 77.00,7.05 91.90,6.70 96.80,5.50 106.80,9.50 111.70,7.40 119.20,9.50 126.60,5.80 132.90,6.10 139.10,7.70 141.60,7.05" fill="none" stroke="#2a85e4" stroke-width="2" stroke-linejoin="round"/><rect x="0" y="36.50" width="143" height="2" fill="#5b6876"/><circle cx="21.10" cy="5.20" r="2.8" fill="#666b70"/></svg>
<div id="t110" style="position:absolute;top:1635.67px;font-size:22.00px;line-height:22.00px;color:#1c292f;font-weight:400;white-space:nowrap;letter-spacing:0.668px;left:2802.00px;text-shadow:0 0 2px #fff,0 0 2px #fff;"><span>3.02 min</span></div>
<div style="position:absolute;left:2974.70px;top:1629.30px;width:107.00px;height:51.50px;background:#e6f6e8;border-radius:8px;"></div>
<div id="t111" style="position:absolute;top:1642.79px;font-size:26.00px;line-height:26.00px;color:#1f7a36;font-weight:700;white-space:nowrap;letter-spacing:0.340px;left:2988.00px;"><span>2 % </span></div>
<svg style="position:absolute;left:3039.70px;top:1641.30px;" width="26" height="26" viewBox="0 0 26 26"><path d="M3 4 L21 22 M21 9 V22 H8" fill="none" stroke="#1f7a36" stroke-width="3"/></svg>
<div id="t112" style="position:absolute;top:1640.25px;font-size:29.00px;line-height:29.00px;color:#1063c1;font-weight:400;white-space:nowrap;letter-spacing:1.006px;right:91.99px;"><span>Instrument Cluster</span></div>
<svg style="position:absolute;left:3760.00px;top:1639.30px;" width="27" height="27" viewBox="0 0 27 27"><path d="M11 4 H4 V23 H23 V16 M15 4 H23 V12 M23 4 L12 15" fill="none" stroke="#1063c1" stroke-width="2.8"/></svg>
<div style="position:absolute;left:148.00px;top:1812.20px;width:3654.00px;height:2.00px;background:#dde1e6;"></div>
<svg style="position:absolute;left:163.00px;top:1734.50px;" width="52" height="52" viewBox="0 0 52 52"><rect width="52" height="52" rx="8" fill="#6c63c9"/><path d="M7.6 18.4 L25.5 8.7 L39.1 16.0 M7.6 18.4 L25.5 28.4 L43.1 18.4 L43.1 25.1 L25.5 35.0 L8.4 25.5 L8.4 31.5 L25.5 41.2 L43.1 31.5 L43.1 37.7 L25.5 47.4 L7.9 37.3" fill="none" stroke="#fff" stroke-width="1.9"/></svg>
<div id="t113" style="position:absolute;top:1727.15px;font-size:29.00px;line-height:29.00px;color:#1c292f;font-weight:400;white-space:nowrap;letter-spacing:0.747px;left:333.50px;"><span>inefficient-skewed-job</span></div>
<svg style="position:absolute;left:335.00px;top:1771.50px;" width="16" height="22" viewBox="0 0 16 22"><path d="M10 0 L1 12 H7 L5 22 L15 9 H9Z" fill="#6f767b"/></svg>
<div id="t114" style="position:absolute;top:1770.13px;font-size:23.00px;line-height:23.00px;color:#7a8186;font-weight:400;white-space:nowrap;letter-spacing:1.297px;left:358.00px;"><span>1 RUNNING | 12 min 2 s</span></div>
<div style="position:absolute;left:895.00px;top:1738.50px;width:194.00px;height:43.50px;background:#e6f6e8;border-radius:7px;"></div>
<div id="t115" style="position:absolute;top:1748.33px;font-size:25.00px;line-height:25.00px;color:#1f7a36;font-weight:700;white-space:nowrap;letter-spacing:-0.875px;left:992.00px;width:0;display:flex;justify-content:center;"><span>1 OK</span></div>
<div style="position:absolute;left:1189.70px;top:1738.50px;width:185.70px;height:43.50px;background:#e6f6e8;border-radius:8px;"></div>
<div id="t116" style="position:absolute;top:1748.33px;font-size:25.00px;line-height:25.00px;color:#1f7a36;font-weight:700;white-space:nowrap;letter-spacing:-0.875px;left:1282.50px;width:0;display:flex;justify-content:center;"><span>OK</span></div>
<div id="t117" style="position:absolute;top:1745.95px;font-size:29.00px;line-height:29.00px;color:#1c292f;font-weight:400;white-space:nowrap;letter-spacing:0.082px;right:2115.92px;"><span>15 min 24 s</span></div>
<div id="t118" style="position:absolute;top:1740.45px;font-size:29.00px;line-height:29.00px;color:#1c292f;font-weight:400;white-space:nowrap;letter-spacing:0.129px;right:1707.37px;"><span>168</span></div>
<div style="position:absolute;left:2001.00px;top:1773.50px;width:131.80px;height:12.50px;background:#dde1e8;"></div>
<div style="position:absolute;left:2001.00px;top:1773.50px;width:2.50px;height:12.50px;background:#368de3;"></div>
<div id="t119" style="position:absolute;top:1740.45px;font-size:29.00px;line-height:29.00px;color:#1c292f;font-weight:400;white-space:nowrap;letter-spacing:0.221px;right:1335.78px;"><span>0%</span></div>
<div style="position:absolute;left:2372.00px;top:1773.50px;width:131.80px;height:12.50px;background:#dde1e8;"></div>
<div id="t120" style="position:absolute;top:1745.95px;font-size:29.00px;line-height:29.00px;color:#1c292f;font-weight:400;white-space:nowrap;letter-spacing:0.082px;right:1076.32px;"><span>16 min 37 s</span></div>
<svg style="position:absolute;left:2800.00px;top:1742.00px;overflow:visible;" width="146" height="40" viewBox="0 0 146 40"><path d="M0,37.50 L0.25,8.90 L8.60,8.00 L27.30,8.90 L52.10,8.60 L77.00,8.30 L101.80,8.60 L114.20,8.60 L119.20,11.40 L126.60,12.00 L132.90,11.70 L141.60,11.70 L141.60,37.50 Z" fill="#a3cffa"/><polyline points="0.25,8.90 8.60,8.00 27.30,8.90 52.10,8.60 77.00,8.30 101.80,8.60 114.20,8.60 119.20,11.40 126.60,12.00 132.90,11.70 141.60,11.70" fill="none" stroke="#2a85e4" stroke-width="2" stroke-linejoin="round"/><rect x="0" y="36.50" width="143" height="2" fill="#5b6876"/><circle cx="60.50" cy="6.40" r="2.8" fill="#4a4f55"/></svg>
<div id="t121" style="position:absolute;top:1741.37px;font-size:22.00px;line-height:22.00px;color:#1c292f;font-weight:400;white-space:nowrap;letter-spacing:0.671px;left:2802.00px;text-shadow:0 0 2px #fff,0 0 2px #fff;"><span>18.33 min</span></div>
<div style="position:absolute;left:2974.70px;top:1735.00px;width:107.00px;height:51.50px;background:#e6f6e8;border-radius:8px;"></div>
<div id="t122" style="position:absolute;top:1748.49px;font-size:26.00px;line-height:26.00px;color:#1f7a36;font-weight:700;white-space:nowrap;letter-spacing:0.340px;left:2988.00px;"><span>3 % </span></div>
<svg style="position:absolute;left:3039.70px;top:1747.00px;" width="26" height="26" viewBox="0 0 26 26"><path d="M3 4 L21 22 M21 9 V22 H8" fill="none" stroke="#1f7a36" stroke-width="3"/></svg>
<div style="position:absolute;left:3221.00px;top:1708.50px;width:195.00px;height:103.00px;background:#f5930a;"></div>
<div id="t123" style="position:absolute;top:1745.95px;font-size:29.00px;line-height:29.00px;color:#fff;font-weight:400;white-space:nowrap;letter-spacing:0.111px;right:442.89px;"><span>87.3%</span></div>
<div id="t124" style="position:absolute;top:1740.45px;font-size:29.00px;line-height:29.00px;color:#1c292f;font-weight:400;white-space:nowrap;letter-spacing:0.098px;right:53.30px;"><span>$9.70</span></div>
<div style="position:absolute;left:3655.00px;top:1774.00px;width:132.00px;height:12.50px;background:#dde1e8;"></div>
<div style="position:absolute;left:148.00px;top:1917.90px;width:3654.00px;height:2.00px;background:#dde1e6;"></div>
<svg style="position:absolute;left:163.00px;top:1840.20px;" width="52" height="52" viewBox="0 0 52 52"><rect width="52" height="52" rx="8" fill="#fdc414"/><path d="M7.6 18.4 L25.5 8.7 L39.1 16.0 M7.6 18.4 L25.5 28.4 L43.1 18.4 L43.1 25.1 L25.5 35.0 L8.4 25.5 L8.4 31.5 L25.5 41.2 L43.1 31.5 L43.1 37.7 L25.5 47.4 L7.9 37.3" fill="none" stroke="#111" stroke-width="1.9"/></svg>
<div id="t125" style="position:absolute;top:1851.15px;font-size:29.00px;line-height:29.00px;color:#1c292f;font-weight:400;white-space:nowrap;letter-spacing:0.484px;left:333.00px;"><span>profit_measure_by_product_type</span></div>
<div style="position:absolute;left:895.00px;top:1844.20px;width:194.00px;height:43.50px;background:#e6f6e8;border-radius:7px;"></div>
<div id="t126" style="position:absolute;top:1854.03px;font-size:25.00px;line-height:25.00px;color:#1f7a36;font-weight:700;white-space:nowrap;letter-spacing:-0.875px;left:992.00px;width:0;display:flex;justify-content:center;"><span>1 OK</span></div>
<div style="position:absolute;left:1189.70px;top:1844.20px;width:185.70px;height:43.50px;background:#e6f6e8;border-radius:8px;"></div>
<div id="t127" style="position:absolute;top:1854.03px;font-size:25.00px;line-height:25.00px;color:#1f7a36;font-weight:700;white-space:nowrap;letter-spacing:-0.875px;left:1282.50px;width:0;display:flex;justify-content:center;"><span>OK</span></div>
<div id="t128" style="position:absolute;top:1851.65px;font-size:29.00px;line-height:29.00px;color:#1c292f;font-weight:400;white-space:nowrap;letter-spacing:0.082px;right:2115.92px;"><span>41 min 29 s</span></div>
<div id="t129" style="position:absolute;top:1846.15px;font-size:29.00px;line-height:29.00px;color:#1c292f;font-weight:400;white-space:nowrap;letter-spacing:0.168px;right:1707.33px;"><span>84</span></div>
<div style="position:absolute;left:2001.00px;top:1879.20px;width:131.80px;height:12.50px;background:#dde1e8;"></div>
<div style="position:absolute;left:2001.00px;top:1879.20px;width:2.50px;height:12.50px;background:#368de3;"></div>
<div id="t130" style="position:absolute;top:1846.15px;font-size:29.00px;line-height:29.00px;color:#1c292f;font-weight:400;white-space:nowrap;letter-spacing:0.221px;right:1335.78px;"><span>0%</span></div>
<div style="position:absolute;left:2372.00px;top:1879.20px;width:131.80px;height:12.50px;background:#dde1e8;"></div>
<div id="t131" style="position:absolute;top:1851.65px;font-size:29.00px;line-height:29.00px;color:#1c292f;font-weight:400;white-space:nowrap;letter-spacing:0.081px;right:1076.32px;"><span>43 min 0 s</span></div>
<svg style="position:absolute;left:2800.00px;top:1847.70px;overflow:visible;" width="146" height="40" viewBox="0 0 146 40"><path d="M0,37.50 L0.25,11.10 L14.80,10.45 L33.50,12.90 L45.90,12.00 L61.40,11.10 L77.00,12.00 L89.40,12.90 L108.00,10.80 L117.30,11.40 L126.60,13.55 L137.80,11.40 L141.60,12.90 L141.60,37.50 Z" fill="#a3cffa"/><polyline points="0.25,11.10 14.80,10.45 33.50,12.90 45.90,12.00 61.40,11.10 77.00,12.00 89.40,12.90 108.00,10.80 117.30,11.40 126.60,13.55 137.80,11.40 141.60,12.90" fill="none" stroke="#2a85e4" stroke-width="2" stroke-linejoin="round"/><rect x="0" y="36.50" width="143" height="2" fill="#5b6876"/></svg>
<div id="t132" style="position:absolute;top:1847.07px;font-size:22.00px;line-height:22.00px;color:#1c292f;font-weight:400;white-space:nowrap;letter-spacing:0.671px;left:2802.00px;text-shadow:0 0 2px #fff,0 0 2px #fff;"><span>49.17 min</span></div>
<div style="position:absolute;left:2974.70px;top:1840.70px;width:129.00px;height:51.50px;background:#fce6e8;border-radius:8px;"></div>
<div id="t133" style="position:absolute;top:1854.19px;font-size:26.00px;line-height:26.00px;color:#b8263a;font-weight:700;white-space:nowrap;letter-spacing:0.311px;left:2988.00px;"><span>&lt; 1 % </span></div>
<div style="position:absolute;left:3062.70px;top:1864.20px;width:22.00px;height:3.00px;background:#b8263a;"></div>
<div style="position:absolute;left:3221.00px;top:1814.20px;width:195.00px;height:103.00px;background:#fcf4df;"></div>
<div id="t134" style="position:absolute;top:1851.65px;font-size:29.00px;line-height:29.00px;color:#1c292f;font-weight:400;white-space:nowrap;letter-spacing:0.111px;right:442.89px;"><span>57.9%</span></div>
<div id="t135" style="position:absolute;top:1846.15px;font-size:29.00px;line-height:29.00px;color:#1c292f;font-weight:400;white-space:nowrap;letter-spacing:0.098px;right:53.30px;"><span>$3.15</span></div>
<div style="position:absolute;left:3655.00px;top:1879.70px;width:132.00px;height:12.50px;background:#dde1e8;"></div>
<div style="position:absolute;left:148.00px;top:2023.60px;width:3654.00px;height:2.00px;background:#dde1e6;"></div>
<svg style="position:absolute;left:163.00px;top:1945.90px;" width="52" height="52" viewBox="0 0 52 52"><rect width="52" height="52" rx="8" fill="#6c63c9"/><path d="M7.6 18.4 L25.5 8.7 L39.1 16.0 M7.6 18.4 L25.5 28.4 L43.1 18.4 L43.1 25.1 L25.5 35.0 L8.4 25.5 L8.4 31.5 L25.5 41.2 L43.1 31.5 L43.1 37.7 L25.5 47.4 L7.9 37.3" fill="none" stroke="#fff" stroke-width="1.9"/></svg>
<div id="t136" style="position:absolute;top:1956.85px;font-size:29.00px;line-height:29.00px;color:#1c292f;font-weight:400;white-space:nowrap;letter-spacing:0.651px;left:333.00px;"><span>price_distribution</span></div>
<div style="position:absolute;left:895.00px;top:1949.90px;width:194.00px;height:43.50px;background:#e6f6e8;border-radius:7px;"></div>
<div id="t137" style="position:absolute;top:1959.73px;font-size:25.00px;line-height:25.00px;color:#1f7a36;font-weight:700;white-space:nowrap;letter-spacing:-0.875px;left:992.00px;width:0;display:flex;justify-content:center;"><span>1 OK</span></div>
<div style="position:absolute;left:1189.70px;top:1949.90px;width:185.70px;height:43.50px;background:#e6f6e8;border-radius:8px;"></div>
<div id="t138" style="position:absolute;top:1959.73px;font-size:25.00px;line-height:25.00px;color:#1f7a36;font-weight:700;white-space:nowrap;letter-spacing:-0.875px;left:1282.50px;width:0;display:flex;justify-content:center;"><span>OK</span></div>
<div id="t139" style="position:absolute;top:1957.35px;font-size:29.00px;line-height:29.00px;color:#1c292f;font-weight:400;white-space:nowrap;letter-spacing:0.082px;right:2115.92px;"><span>18 min 57 s</span></div>
<div id="t140" style="position:absolute;top:1951.85px;font-size:29.00px;line-height:29.00px;color:#1c292f;font-weight:400;white-space:nowrap;letter-spacing:0.168px;right:1707.33px;"><span>84</span></div>
<div style="position:absolute;left:2001.00px;top:1984.90px;width:131.80px;height:12.50px;background:#dde1e8;"></div>
<div style="position:absolute;left:2001.00px;top:1984.90px;width:2.50px;height:12.50px;background:#368de3;"></div>
<div id="t141" style="position:absolute;top:1951.85px;font-size:29.00px;line-height:29.00px;color:#1c292f;font-weight:400;white-space:nowrap;letter-spacing:0.221px;right:1335.78px;"><span>0%</span></div>
<div style="position:absolute;left:2372.00px;top:1984.90px;width:131.80px;height:12.50px;background:#dde1e8;"></div>
<div id="t142" style="position:absolute;top:1957.35px;font-size:29.00px;line-height:29.00px;color:#1c292f;font-weight:400;white-space:nowrap;letter-spacing:0.082px;right:1076.32px;"><span>19 min 50 s</span></div>
<svg style="position:absolute;left:2800.00px;top:1953.40px;overflow:visible;" width="146" height="40" viewBox="0 0 146 40"><path d="M0,37.50 L0.25,10.20 L21.10,9.90 L33.50,9.60 L39.70,8.70 L45.90,9.30 L58.30,9.30 L61.40,11.20 L64.50,9.30 L77.00,9.90 L101.80,9.90 L120.40,12.40 L129.80,10.20 L141.60,11.80 L141.60,37.50 Z" fill="#a3cffa"/><polyline points="0.25,10.20 21.10,9.90 33.50,9.60 39.70,8.70 45.90,9.30 58.30,9.30 61.40,11.20 64.50,9.30 77.00,9.90 101.80,9.90 120.40,12.40 129.80,10.20 141.60,11.80" fill="none" stroke="#2a85e4" stroke-width="2" stroke-linejoin="round"/><rect x="0" y="36.50" width="143" height="2" fill="#5b6876"/><circle cx="36.00" cy="4.00" r="2.8" fill="#55595e"/></svg>
<div id="t143" style="position:absolute;top:1952.77px;font-size:22.00px;line-height:22.00px;color:#1c292f;font-weight:400;white-space:nowrap;letter-spacing:0.671px;left:2802.00px;text-shadow:0 0 2px #fff,0 0 2px #fff;"><span>24.77 min</span></div>
<div style="position:absolute;left:2974.70px;top:1946.40px;width:129.00px;height:51.50px;background:#fce6e8;border-radius:8px;"></div>
<div id="t144" style="position:absolute;top:1959.89px;font-size:26.00px;line-height:26.00px;color:#b8263a;font-weight:700;white-space:nowrap;letter-spacing:0.311px;left:2988.00px;"><span>&lt; 1 % </span></div>
<div style="position:absolute;left:3062.70px;top:1969.90px;width:22.00px;height:3.00px;background:#b8263a;"></div>
<div style="position:absolute;left:3221.00px;top:1919.90px;width:195.00px;height:103.00px;background:#f5930a;"></div>
<div id="t145" style="position:absolute;top:1957.35px;font-size:29.00px;line-height:29.00px;color:#fff;font-weight:400;white-space:nowrap;letter-spacing:0.111px;right:442.89px;"><span>73.3%</span></div>
<div id="t146" style="position:absolute;top:1951.85px;font-size:29.00px;line-height:29.00px;color:#1c292f;font-weight:400;white-space:nowrap;letter-spacing:0.098px;right:53.30px;"><span>$1.61</span></div>
<div style="position:absolute;left:3655.00px;top:1985.40px;width:132.00px;height:12.50px;background:#dde1e8;"></div>
</body></html>
